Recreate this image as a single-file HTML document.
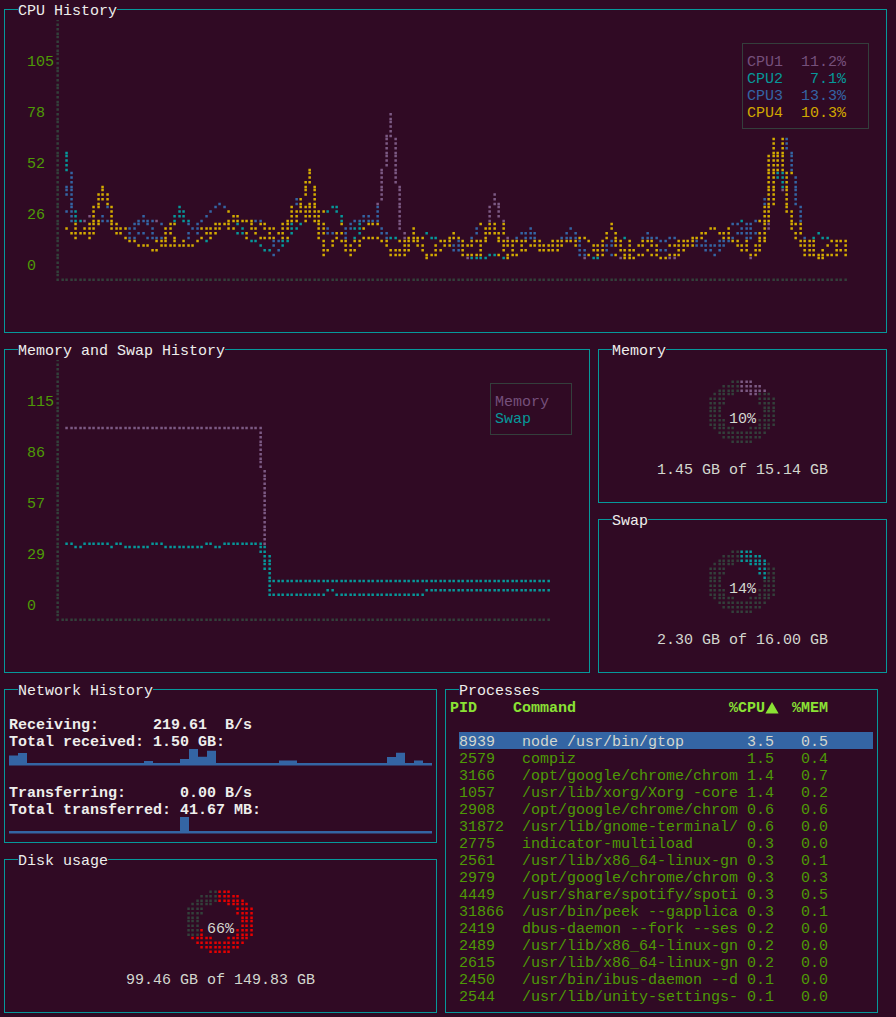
<!DOCTYPE html>
<html><head><meta charset="utf-8"><style>
html,body{margin:0;padding:0;background:#300a24;}
body{width:896px;height:1017px;overflow:hidden;position:relative;
font-family:"Liberation Mono",monospace;font-size:15px;}
.b{position:absolute;box-sizing:border-box;border:1px solid;}
.t{position:absolute;white-space:pre;line-height:17px;height:17px;margin-top:3px;}
.sel{position:absolute;}
svg{position:absolute;left:0;top:0;}
</style></head>
<body>
<svg width="896" height="1017" viewBox="0 0 896 1017"><path fill="#33403b" d="M56.4 18.8h2.5v2.5h-2.5zM56.4 23.4h2.5v2.5h-2.5zM56.4 27.9h2.5v2.5h-2.5zM56.4 32.6h2.5v2.5h-2.5zM56.4 45.0h2.5v2.5h-2.5zM56.4 49.6h2.5v2.5h-2.5zM56.4 35.8h2.5v2.5h-2.5zM56.4 40.4h2.5v2.5h-2.5zM56.4 52.8h2.5v2.5h-2.5zM56.4 57.4h2.5v2.5h-2.5zM56.4 62.0h2.5v2.5h-2.5zM56.4 66.7h2.5v2.5h-2.5zM56.4 69.8h2.5v2.5h-2.5zM56.4 74.3h2.5v2.5h-2.5zM56.4 79.0h2.5v2.5h-2.5zM56.4 83.7h2.5v2.5h-2.5zM56.4 91.3h2.5v2.5h-2.5zM56.4 96.0h2.5v2.5h-2.5zM56.4 100.7h2.5v2.5h-2.5zM56.4 86.8h2.5v2.5h-2.5zM56.4 117.7h2.5v2.5h-2.5zM56.4 103.8h2.5v2.5h-2.5zM56.4 108.3h2.5v2.5h-2.5zM56.4 113.0h2.5v2.5h-2.5zM56.4 120.8h2.5v2.5h-2.5zM56.4 125.3h2.5v2.5h-2.5zM56.4 129.9h2.5v2.5h-2.5zM56.4 134.7h2.5v2.5h-2.5zM56.4 142.3h2.5v2.5h-2.5zM56.4 146.9h2.5v2.5h-2.5zM56.4 151.7h2.5v2.5h-2.5zM56.4 137.8h2.5v2.5h-2.5zM56.4 163.9h2.5v2.5h-2.5zM56.4 168.7h2.5v2.5h-2.5zM56.4 154.8h2.5v2.5h-2.5zM56.4 159.3h2.5v2.5h-2.5zM56.4 171.8h2.5v2.5h-2.5zM56.4 176.3h2.5v2.5h-2.5zM56.4 180.9h2.5v2.5h-2.5zM56.4 185.7h2.5v2.5h-2.5zM56.4 188.8h2.5v2.5h-2.5zM56.4 193.3h2.5v2.5h-2.5zM56.4 197.9h2.5v2.5h-2.5zM56.4 202.7h2.5v2.5h-2.5zM56.4 210.3h2.5v2.5h-2.5zM56.4 214.9h2.5v2.5h-2.5zM56.4 219.7h2.5v2.5h-2.5zM56.4 205.8h2.5v2.5h-2.5zM56.4 236.7h2.5v2.5h-2.5zM56.4 222.8h2.5v2.5h-2.5zM56.4 227.3h2.5v2.5h-2.5zM56.4 231.9h2.5v2.5h-2.5zM56.4 239.8h2.5v2.5h-2.5zM56.4 244.3h2.5v2.5h-2.5zM56.4 248.9h2.5v2.5h-2.5zM56.4 253.7h2.5v2.5h-2.5zM56.4 261.4h2.5v2.5h-2.5zM56.4 265.9h2.5v2.5h-2.5zM56.4 270.6h2.5v2.5h-2.5zM56.4 256.8h2.5v2.5h-2.5zM61.4 278.4h2.5v2.5h-2.5zM56.4 273.8h2.5v2.5h-2.5zM56.4 278.4h2.5v2.5h-2.5zM65.3 278.4h2.5v2.5h-2.5zM70.3 278.4h2.5v2.5h-2.5zM74.3 278.4h2.5v2.5h-2.5zM79.3 278.4h2.5v2.5h-2.5zM88.3 278.4h2.5v2.5h-2.5zM83.3 278.4h2.5v2.5h-2.5zM97.3 278.4h2.5v2.5h-2.5zM92.3 278.4h2.5v2.5h-2.5zM101.3 278.4h2.5v2.5h-2.5zM106.3 278.4h2.5v2.5h-2.5zM110.3 278.4h2.5v2.5h-2.5zM115.3 278.4h2.5v2.5h-2.5zM124.3 278.4h2.5v2.5h-2.5zM119.3 278.4h2.5v2.5h-2.5zM133.3 278.4h2.5v2.5h-2.5zM128.3 278.4h2.5v2.5h-2.5zM137.3 278.4h2.5v2.5h-2.5zM142.3 278.4h2.5v2.5h-2.5zM146.3 278.4h2.5v2.5h-2.5zM151.3 278.4h2.5v2.5h-2.5zM160.3 278.4h2.5v2.5h-2.5zM155.3 278.4h2.5v2.5h-2.5zM169.3 278.4h2.5v2.5h-2.5zM164.3 278.4h2.5v2.5h-2.5zM173.3 278.4h2.5v2.5h-2.5zM178.3 278.4h2.5v2.5h-2.5zM182.3 278.4h2.5v2.5h-2.5zM187.3 278.4h2.5v2.5h-2.5zM196.3 278.4h2.5v2.5h-2.5zM191.3 278.4h2.5v2.5h-2.5zM200.3 278.4h2.5v2.5h-2.5zM205.3 278.4h2.5v2.5h-2.5zM209.3 278.4h2.5v2.5h-2.5zM214.3 278.4h2.5v2.5h-2.5zM218.3 278.4h2.5v2.5h-2.5zM223.3 278.4h2.5v2.5h-2.5zM232.3 278.4h2.5v2.5h-2.5zM227.3 278.4h2.5v2.5h-2.5zM236.3 278.4h2.5v2.5h-2.5zM241.3 278.4h2.5v2.5h-2.5zM245.3 278.4h2.5v2.5h-2.5zM250.3 278.4h2.5v2.5h-2.5zM254.3 278.4h2.5v2.5h-2.5zM259.4 278.4h2.5v2.5h-2.5zM268.4 278.4h2.5v2.5h-2.5zM263.4 278.4h2.5v2.5h-2.5zM272.4 278.4h2.5v2.5h-2.5zM277.4 278.4h2.5v2.5h-2.5zM281.4 278.4h2.5v2.5h-2.5zM286.4 278.4h2.5v2.5h-2.5zM295.4 278.4h2.5v2.5h-2.5zM290.4 278.4h2.5v2.5h-2.5zM304.4 278.4h2.5v2.5h-2.5zM299.4 278.4h2.5v2.5h-2.5zM308.4 278.4h2.5v2.5h-2.5zM313.4 278.4h2.5v2.5h-2.5zM317.4 278.4h2.5v2.5h-2.5zM322.4 278.4h2.5v2.5h-2.5zM331.4 278.4h2.5v2.5h-2.5zM326.4 278.4h2.5v2.5h-2.5zM340.4 278.4h2.5v2.5h-2.5zM335.4 278.4h2.5v2.5h-2.5zM344.4 278.4h2.5v2.5h-2.5zM349.4 278.4h2.5v2.5h-2.5zM353.4 278.4h2.5v2.5h-2.5zM358.4 278.4h2.5v2.5h-2.5zM367.4 278.4h2.5v2.5h-2.5zM362.4 278.4h2.5v2.5h-2.5zM376.4 278.4h2.5v2.5h-2.5zM371.4 278.4h2.5v2.5h-2.5zM380.4 278.4h2.5v2.5h-2.5zM385.4 278.4h2.5v2.5h-2.5zM389.4 278.4h2.5v2.5h-2.5zM394.4 278.4h2.5v2.5h-2.5zM403.4 278.4h2.5v2.5h-2.5zM398.4 278.4h2.5v2.5h-2.5zM407.4 278.4h2.5v2.5h-2.5zM412.4 278.4h2.5v2.5h-2.5zM416.4 278.4h2.5v2.5h-2.5zM421.4 278.4h2.5v2.5h-2.5zM425.4 278.4h2.5v2.5h-2.5zM430.4 278.4h2.5v2.5h-2.5zM439.4 278.4h2.5v2.5h-2.5zM434.4 278.4h2.5v2.5h-2.5zM443.4 278.4h2.5v2.5h-2.5zM448.4 278.4h2.5v2.5h-2.5zM452.4 278.4h2.5v2.5h-2.5zM457.4 278.4h2.5v2.5h-2.5zM466.4 278.4h2.5v2.5h-2.5zM461.4 278.4h2.5v2.5h-2.5zM475.4 278.4h2.5v2.5h-2.5zM470.4 278.4h2.5v2.5h-2.5zM479.4 278.4h2.5v2.5h-2.5zM484.4 278.4h2.5v2.5h-2.5zM488.4 278.4h2.5v2.5h-2.5zM493.4 278.4h2.5v2.5h-2.5zM502.4 278.4h2.5v2.5h-2.5zM497.4 278.4h2.5v2.5h-2.5zM511.4 278.4h2.5v2.5h-2.5zM506.4 278.4h2.5v2.5h-2.5zM515.4 278.4h2.5v2.5h-2.5zM520.4 278.4h2.5v2.5h-2.5zM524.4 278.4h2.5v2.5h-2.5zM529.4 278.4h2.5v2.5h-2.5zM538.4 278.4h2.5v2.5h-2.5zM533.4 278.4h2.5v2.5h-2.5zM547.4 278.4h2.5v2.5h-2.5zM542.4 278.4h2.5v2.5h-2.5zM551.4 278.4h2.5v2.5h-2.5zM556.4 278.4h2.5v2.5h-2.5zM560.4 278.4h2.5v2.5h-2.5zM565.4 278.4h2.5v2.5h-2.5zM574.4 278.4h2.5v2.5h-2.5zM569.4 278.4h2.5v2.5h-2.5zM578.4 278.4h2.5v2.5h-2.5zM583.4 278.4h2.5v2.5h-2.5zM587.4 278.4h2.5v2.5h-2.5zM592.4 278.4h2.5v2.5h-2.5zM596.4 278.4h2.5v2.5h-2.5zM601.4 278.4h2.5v2.5h-2.5zM610.4 278.4h2.5v2.5h-2.5zM605.4 278.4h2.5v2.5h-2.5zM614.4 278.4h2.5v2.5h-2.5zM619.4 278.4h2.5v2.5h-2.5zM623.4 278.4h2.5v2.5h-2.5zM628.4 278.4h2.5v2.5h-2.5zM637.4 278.4h2.5v2.5h-2.5zM632.4 278.4h2.5v2.5h-2.5zM641.4 278.4h2.5v2.5h-2.5zM646.4 278.4h2.5v2.5h-2.5zM650.4 278.4h2.5v2.5h-2.5zM655.4 278.4h2.5v2.5h-2.5zM659.4 278.4h2.5v2.5h-2.5zM664.4 278.4h2.5v2.5h-2.5zM673.4 278.4h2.5v2.5h-2.5zM668.4 278.4h2.5v2.5h-2.5zM677.4 278.4h2.5v2.5h-2.5zM682.4 278.4h2.5v2.5h-2.5zM686.4 278.4h2.5v2.5h-2.5zM691.4 278.4h2.5v2.5h-2.5zM695.4 278.4h2.5v2.5h-2.5zM700.4 278.4h2.5v2.5h-2.5zM709.4 278.4h2.5v2.5h-2.5zM704.4 278.4h2.5v2.5h-2.5zM718.4 278.4h2.5v2.5h-2.5zM713.4 278.4h2.5v2.5h-2.5zM722.4 278.4h2.5v2.5h-2.5zM727.4 278.4h2.5v2.5h-2.5zM731.4 278.4h2.5v2.5h-2.5zM736.4 278.4h2.5v2.5h-2.5zM745.4 278.4h2.5v2.5h-2.5zM740.4 278.4h2.5v2.5h-2.5zM749.4 278.4h2.5v2.5h-2.5zM754.4 278.4h2.5v2.5h-2.5zM758.4 278.4h2.5v2.5h-2.5zM763.4 278.4h2.5v2.5h-2.5zM767.4 278.4h2.5v2.5h-2.5zM772.4 278.4h2.5v2.5h-2.5zM781.4 278.4h2.5v2.5h-2.5zM776.4 278.4h2.5v2.5h-2.5zM785.4 278.4h2.5v2.5h-2.5zM790.4 278.4h2.5v2.5h-2.5zM794.4 278.4h2.5v2.5h-2.5zM799.4 278.4h2.5v2.5h-2.5zM808.4 278.4h2.5v2.5h-2.5zM803.4 278.4h2.5v2.5h-2.5zM812.4 278.4h2.5v2.5h-2.5zM817.4 278.4h2.5v2.5h-2.5zM821.4 278.4h2.5v2.5h-2.5zM826.4 278.4h2.5v2.5h-2.5zM830.4 278.4h2.5v2.5h-2.5zM835.4 278.4h2.5v2.5h-2.5zM844.4 278.4h2.5v2.5h-2.5zM839.4 278.4h2.5v2.5h-2.5zM56.4 358.8h2.5v2.5h-2.5zM56.4 363.4h2.5v2.5h-2.5zM56.4 367.9h2.5v2.5h-2.5zM56.4 372.6h2.5v2.5h-2.5zM56.4 380.4h2.5v2.5h-2.5zM56.4 384.9h2.5v2.5h-2.5zM56.4 389.6h2.5v2.5h-2.5zM56.4 375.8h2.5v2.5h-2.5zM56.4 401.9h2.5v2.5h-2.5zM56.4 406.6h2.5v2.5h-2.5zM56.4 392.8h2.5v2.5h-2.5zM56.4 397.4h2.5v2.5h-2.5zM56.4 409.8h2.5v2.5h-2.5zM56.4 414.4h2.5v2.5h-2.5zM56.4 418.9h2.5v2.5h-2.5zM56.4 423.6h2.5v2.5h-2.5zM56.4 426.8h2.5v2.5h-2.5zM56.4 431.4h2.5v2.5h-2.5zM56.4 435.9h2.5v2.5h-2.5zM56.4 440.6h2.5v2.5h-2.5zM56.4 452.9h2.5v2.5h-2.5zM56.4 457.6h2.5v2.5h-2.5zM56.4 443.8h2.5v2.5h-2.5zM56.4 448.4h2.5v2.5h-2.5zM56.4 474.6h2.5v2.5h-2.5zM56.4 460.8h2.5v2.5h-2.5zM56.4 465.4h2.5v2.5h-2.5zM56.4 469.9h2.5v2.5h-2.5zM56.4 477.8h2.5v2.5h-2.5zM56.4 482.4h2.5v2.5h-2.5zM56.4 486.9h2.5v2.5h-2.5zM56.4 491.6h2.5v2.5h-2.5zM56.4 499.4h2.5v2.5h-2.5zM56.4 503.9h2.5v2.5h-2.5zM56.4 508.6h2.5v2.5h-2.5zM56.4 494.8h2.5v2.5h-2.5zM56.4 525.6h2.5v2.5h-2.5zM56.4 511.8h2.5v2.5h-2.5zM56.4 516.4h2.5v2.5h-2.5zM56.4 521.0h2.5v2.5h-2.5zM56.4 528.8h2.5v2.5h-2.5zM56.4 533.4h2.5v2.5h-2.5zM56.4 538.0h2.5v2.5h-2.5zM56.4 542.6h2.5v2.5h-2.5zM56.4 545.8h2.5v2.5h-2.5zM56.4 550.4h2.5v2.5h-2.5zM56.4 555.0h2.5v2.5h-2.5zM56.4 559.6h2.5v2.5h-2.5zM56.4 572.0h2.5v2.5h-2.5zM56.4 576.6h2.5v2.5h-2.5zM56.4 562.8h2.5v2.5h-2.5zM56.4 567.4h2.5v2.5h-2.5zM56.4 593.6h2.5v2.5h-2.5zM56.4 579.8h2.5v2.5h-2.5zM56.4 584.4h2.5v2.5h-2.5zM56.4 589.0h2.5v2.5h-2.5zM56.4 596.8h2.5v2.5h-2.5zM56.4 601.4h2.5v2.5h-2.5zM56.4 606.0h2.5v2.5h-2.5zM56.4 610.6h2.5v2.5h-2.5zM56.4 618.4h2.5v2.5h-2.5zM61.4 618.4h2.5v2.5h-2.5zM56.4 613.8h2.5v2.5h-2.5zM70.3 618.4h2.5v2.5h-2.5zM65.3 618.4h2.5v2.5h-2.5zM74.3 618.4h2.5v2.5h-2.5zM79.3 618.4h2.5v2.5h-2.5zM83.3 618.4h2.5v2.5h-2.5zM88.3 618.4h2.5v2.5h-2.5zM97.3 618.4h2.5v2.5h-2.5zM92.3 618.4h2.5v2.5h-2.5zM106.3 618.4h2.5v2.5h-2.5zM101.3 618.4h2.5v2.5h-2.5zM110.3 618.4h2.5v2.5h-2.5zM115.3 618.4h2.5v2.5h-2.5zM119.3 618.4h2.5v2.5h-2.5zM124.3 618.4h2.5v2.5h-2.5zM133.3 618.4h2.5v2.5h-2.5zM128.3 618.4h2.5v2.5h-2.5zM137.3 618.4h2.5v2.5h-2.5zM142.3 618.4h2.5v2.5h-2.5zM146.3 618.4h2.5v2.5h-2.5zM151.3 618.4h2.5v2.5h-2.5zM155.3 618.4h2.5v2.5h-2.5zM160.3 618.4h2.5v2.5h-2.5zM169.3 618.4h2.5v2.5h-2.5zM164.3 618.4h2.5v2.5h-2.5zM173.3 618.4h2.5v2.5h-2.5zM178.3 618.4h2.5v2.5h-2.5zM182.3 618.4h2.5v2.5h-2.5zM187.3 618.4h2.5v2.5h-2.5zM191.3 618.4h2.5v2.5h-2.5zM196.3 618.4h2.5v2.5h-2.5zM205.3 618.4h2.5v2.5h-2.5zM200.3 618.4h2.5v2.5h-2.5zM209.3 618.4h2.5v2.5h-2.5zM214.3 618.4h2.5v2.5h-2.5zM218.3 618.4h2.5v2.5h-2.5zM223.3 618.4h2.5v2.5h-2.5zM227.3 618.4h2.5v2.5h-2.5zM232.3 618.4h2.5v2.5h-2.5zM241.3 618.4h2.5v2.5h-2.5zM236.3 618.4h2.5v2.5h-2.5zM245.3 618.4h2.5v2.5h-2.5zM250.3 618.4h2.5v2.5h-2.5zM254.3 618.4h2.5v2.5h-2.5zM259.4 618.4h2.5v2.5h-2.5zM268.4 618.4h2.5v2.5h-2.5zM263.4 618.4h2.5v2.5h-2.5zM277.4 618.4h2.5v2.5h-2.5zM272.4 618.4h2.5v2.5h-2.5zM281.4 618.4h2.5v2.5h-2.5zM286.4 618.4h2.5v2.5h-2.5zM290.4 618.4h2.5v2.5h-2.5zM295.4 618.4h2.5v2.5h-2.5zM304.4 618.4h2.5v2.5h-2.5zM299.4 618.4h2.5v2.5h-2.5zM308.4 618.4h2.5v2.5h-2.5zM313.4 618.4h2.5v2.5h-2.5zM317.4 618.4h2.5v2.5h-2.5zM322.4 618.4h2.5v2.5h-2.5zM326.4 618.4h2.5v2.5h-2.5zM331.4 618.4h2.5v2.5h-2.5zM340.4 618.4h2.5v2.5h-2.5zM335.4 618.4h2.5v2.5h-2.5zM344.4 618.4h2.5v2.5h-2.5zM349.4 618.4h2.5v2.5h-2.5zM353.4 618.4h2.5v2.5h-2.5zM358.4 618.4h2.5v2.5h-2.5zM367.4 618.4h2.5v2.5h-2.5zM362.4 618.4h2.5v2.5h-2.5zM376.4 618.4h2.5v2.5h-2.5zM371.4 618.4h2.5v2.5h-2.5zM380.4 618.4h2.5v2.5h-2.5zM385.4 618.4h2.5v2.5h-2.5zM389.4 618.4h2.5v2.5h-2.5zM394.4 618.4h2.5v2.5h-2.5zM398.4 618.4h2.5v2.5h-2.5zM403.4 618.4h2.5v2.5h-2.5zM412.4 618.4h2.5v2.5h-2.5zM407.4 618.4h2.5v2.5h-2.5zM416.4 618.4h2.5v2.5h-2.5zM421.4 618.4h2.5v2.5h-2.5zM425.4 618.4h2.5v2.5h-2.5zM430.4 618.4h2.5v2.5h-2.5zM439.4 618.4h2.5v2.5h-2.5zM434.4 618.4h2.5v2.5h-2.5zM448.4 618.4h2.5v2.5h-2.5zM443.4 618.4h2.5v2.5h-2.5zM452.4 618.4h2.5v2.5h-2.5zM457.4 618.4h2.5v2.5h-2.5zM461.4 618.4h2.5v2.5h-2.5zM466.4 618.4h2.5v2.5h-2.5zM475.4 618.4h2.5v2.5h-2.5zM470.4 618.4h2.5v2.5h-2.5zM484.4 618.4h2.5v2.5h-2.5zM479.4 618.4h2.5v2.5h-2.5zM488.4 618.4h2.5v2.5h-2.5zM493.4 618.4h2.5v2.5h-2.5zM497.4 618.4h2.5v2.5h-2.5zM502.4 618.4h2.5v2.5h-2.5zM511.4 618.4h2.5v2.5h-2.5zM506.4 618.4h2.5v2.5h-2.5zM515.4 618.4h2.5v2.5h-2.5zM520.4 618.4h2.5v2.5h-2.5zM524.4 618.4h2.5v2.5h-2.5zM529.4 618.4h2.5v2.5h-2.5zM533.4 618.4h2.5v2.5h-2.5zM538.4 618.4h2.5v2.5h-2.5zM547.4 618.4h2.5v2.5h-2.5zM542.4 618.4h2.5v2.5h-2.5zM731.4 389.6h2.5v2.5h-2.5zM736.4 384.9h2.5v2.5h-2.5zM731.4 384.9h2.5v2.5h-2.5zM736.4 380.4h2.5v2.5h-2.5zM736.4 389.6h2.5v2.5h-2.5zM731.4 380.4h2.5v2.5h-2.5zM727.4 384.9h2.5v2.5h-2.5zM727.4 389.6h2.5v2.5h-2.5zM722.4 384.9h2.5v2.5h-2.5zM722.4 389.6h2.5v2.5h-2.5zM718.4 389.6h2.5v2.5h-2.5zM718.4 401.9h2.5v2.5h-2.5zM713.4 397.4h2.5v2.5h-2.5zM718.4 397.4h2.5v2.5h-2.5zM713.4 392.8h2.5v2.5h-2.5zM718.4 392.8h2.5v2.5h-2.5zM713.4 406.6h2.5v2.5h-2.5zM718.4 406.6h2.5v2.5h-2.5zM713.4 401.9h2.5v2.5h-2.5zM722.4 392.8h2.5v2.5h-2.5zM722.4 401.9h2.5v2.5h-2.5zM722.4 397.4h2.5v2.5h-2.5zM727.4 392.8h2.5v2.5h-2.5zM731.4 392.8h2.5v2.5h-2.5zM763.4 392.8h2.5v2.5h-2.5zM758.4 401.9h2.5v2.5h-2.5zM763.4 401.9h2.5v2.5h-2.5zM758.4 397.4h2.5v2.5h-2.5zM763.4 397.4h2.5v2.5h-2.5zM763.4 406.6h2.5v2.5h-2.5zM758.4 392.8h2.5v2.5h-2.5zM767.4 401.9h2.5v2.5h-2.5zM772.4 401.9h2.5v2.5h-2.5zM767.4 397.4h2.5v2.5h-2.5zM772.4 397.4h2.5v2.5h-2.5zM767.4 406.6h2.5v2.5h-2.5zM767.4 392.8h2.5v2.5h-2.5zM772.4 406.6h2.5v2.5h-2.5zM709.4 397.4h2.5v2.5h-2.5zM709.4 401.9h2.5v2.5h-2.5zM709.4 406.6h2.5v2.5h-2.5zM709.4 418.9h2.5v2.5h-2.5zM709.4 423.6h2.5v2.5h-2.5zM709.4 409.8h2.5v2.5h-2.5zM709.4 414.4h2.5v2.5h-2.5zM713.4 414.4h2.5v2.5h-2.5zM718.4 414.4h2.5v2.5h-2.5zM713.4 409.8h2.5v2.5h-2.5zM718.4 409.8h2.5v2.5h-2.5zM713.4 423.6h2.5v2.5h-2.5zM718.4 423.6h2.5v2.5h-2.5zM713.4 418.9h2.5v2.5h-2.5zM718.4 418.9h2.5v2.5h-2.5zM758.4 418.9h2.5v2.5h-2.5zM763.4 418.9h2.5v2.5h-2.5zM763.4 414.4h2.5v2.5h-2.5zM763.4 409.8h2.5v2.5h-2.5zM758.4 423.6h2.5v2.5h-2.5zM763.4 423.6h2.5v2.5h-2.5zM767.4 414.4h2.5v2.5h-2.5zM772.4 414.4h2.5v2.5h-2.5zM767.4 409.8h2.5v2.5h-2.5zM772.4 409.8h2.5v2.5h-2.5zM767.4 423.6h2.5v2.5h-2.5zM772.4 423.6h2.5v2.5h-2.5zM767.4 418.9h2.5v2.5h-2.5zM772.4 418.9h2.5v2.5h-2.5zM722.4 418.9h2.5v2.5h-2.5zM722.4 423.6h2.5v2.5h-2.5zM718.4 426.8h2.5v2.5h-2.5zM718.4 431.4h2.5v2.5h-2.5zM713.4 426.8h2.5v2.5h-2.5zM727.4 431.4h2.5v2.5h-2.5zM722.4 426.8h2.5v2.5h-2.5zM727.4 426.8h2.5v2.5h-2.5zM727.4 435.9h2.5v2.5h-2.5zM722.4 435.9h2.5v2.5h-2.5zM722.4 431.4h2.5v2.5h-2.5zM736.4 440.6h2.5v2.5h-2.5zM731.4 431.4h2.5v2.5h-2.5zM731.4 426.8h2.5v2.5h-2.5zM731.4 440.6h2.5v2.5h-2.5zM736.4 435.9h2.5v2.5h-2.5zM731.4 435.9h2.5v2.5h-2.5zM736.4 431.4h2.5v2.5h-2.5zM754.4 431.4h2.5v2.5h-2.5zM749.4 426.8h2.5v2.5h-2.5zM754.4 426.8h2.5v2.5h-2.5zM749.4 440.6h2.5v2.5h-2.5zM749.4 435.9h2.5v2.5h-2.5zM754.4 435.9h2.5v2.5h-2.5zM749.4 431.4h2.5v2.5h-2.5zM758.4 431.4h2.5v2.5h-2.5zM763.4 431.4h2.5v2.5h-2.5zM758.4 426.8h2.5v2.5h-2.5zM763.4 426.8h2.5v2.5h-2.5zM758.4 435.9h2.5v2.5h-2.5zM767.4 426.8h2.5v2.5h-2.5zM745.4 440.6h2.5v2.5h-2.5zM740.4 431.4h2.5v2.5h-2.5zM740.4 440.6h2.5v2.5h-2.5zM745.4 435.9h2.5v2.5h-2.5zM740.4 435.9h2.5v2.5h-2.5zM745.4 431.4h2.5v2.5h-2.5zM731.4 555.0h2.5v2.5h-2.5zM736.4 559.6h2.5v2.5h-2.5zM731.4 550.4h2.5v2.5h-2.5zM731.4 559.6h2.5v2.5h-2.5zM736.4 555.0h2.5v2.5h-2.5zM736.4 550.4h2.5v2.5h-2.5zM722.4 559.6h2.5v2.5h-2.5zM727.4 555.0h2.5v2.5h-2.5zM727.4 559.6h2.5v2.5h-2.5zM722.4 555.0h2.5v2.5h-2.5zM718.4 559.6h2.5v2.5h-2.5zM713.4 562.8h2.5v2.5h-2.5zM718.4 562.8h2.5v2.5h-2.5zM713.4 576.6h2.5v2.5h-2.5zM718.4 576.6h2.5v2.5h-2.5zM713.4 572.0h2.5v2.5h-2.5zM718.4 572.0h2.5v2.5h-2.5zM718.4 567.4h2.5v2.5h-2.5zM713.4 567.4h2.5v2.5h-2.5zM722.4 562.8h2.5v2.5h-2.5zM722.4 567.4h2.5v2.5h-2.5zM727.4 562.8h2.5v2.5h-2.5zM722.4 572.0h2.5v2.5h-2.5zM731.4 562.8h2.5v2.5h-2.5zM767.4 562.8h2.5v2.5h-2.5zM767.4 576.6h2.5v2.5h-2.5zM772.4 576.6h2.5v2.5h-2.5zM767.4 572.0h2.5v2.5h-2.5zM772.4 572.0h2.5v2.5h-2.5zM767.4 567.4h2.5v2.5h-2.5zM772.4 567.4h2.5v2.5h-2.5zM709.4 567.4h2.5v2.5h-2.5zM709.4 572.0h2.5v2.5h-2.5zM709.4 576.6h2.5v2.5h-2.5zM709.4 589.0h2.5v2.5h-2.5zM709.4 593.6h2.5v2.5h-2.5zM709.4 579.8h2.5v2.5h-2.5zM709.4 584.4h2.5v2.5h-2.5zM718.4 593.6h2.5v2.5h-2.5zM713.4 589.0h2.5v2.5h-2.5zM718.4 589.0h2.5v2.5h-2.5zM713.4 584.4h2.5v2.5h-2.5zM718.4 584.4h2.5v2.5h-2.5zM713.4 579.8h2.5v2.5h-2.5zM718.4 579.8h2.5v2.5h-2.5zM713.4 593.6h2.5v2.5h-2.5zM763.4 584.4h2.5v2.5h-2.5zM763.4 579.8h2.5v2.5h-2.5zM758.4 593.6h2.5v2.5h-2.5zM763.4 593.6h2.5v2.5h-2.5zM758.4 589.0h2.5v2.5h-2.5zM763.4 589.0h2.5v2.5h-2.5zM772.4 579.8h2.5v2.5h-2.5zM767.4 593.6h2.5v2.5h-2.5zM772.4 593.6h2.5v2.5h-2.5zM767.4 589.0h2.5v2.5h-2.5zM772.4 589.0h2.5v2.5h-2.5zM767.4 584.4h2.5v2.5h-2.5zM772.4 584.4h2.5v2.5h-2.5zM767.4 579.8h2.5v2.5h-2.5zM722.4 589.0h2.5v2.5h-2.5zM722.4 593.6h2.5v2.5h-2.5zM718.4 596.8h2.5v2.5h-2.5zM718.4 601.4h2.5v2.5h-2.5zM713.4 596.8h2.5v2.5h-2.5zM722.4 606.0h2.5v2.5h-2.5zM727.4 606.0h2.5v2.5h-2.5zM722.4 601.4h2.5v2.5h-2.5zM727.4 601.4h2.5v2.5h-2.5zM722.4 596.8h2.5v2.5h-2.5zM727.4 596.8h2.5v2.5h-2.5zM736.4 606.0h2.5v2.5h-2.5zM736.4 601.4h2.5v2.5h-2.5zM731.4 606.0h2.5v2.5h-2.5zM736.4 610.6h2.5v2.5h-2.5zM731.4 601.4h2.5v2.5h-2.5zM731.4 596.8h2.5v2.5h-2.5zM731.4 610.6h2.5v2.5h-2.5zM749.4 606.0h2.5v2.5h-2.5zM754.4 606.0h2.5v2.5h-2.5zM749.4 601.4h2.5v2.5h-2.5zM754.4 601.4h2.5v2.5h-2.5zM749.4 596.8h2.5v2.5h-2.5zM754.4 596.8h2.5v2.5h-2.5zM749.4 610.6h2.5v2.5h-2.5zM758.4 606.0h2.5v2.5h-2.5zM758.4 601.4h2.5v2.5h-2.5zM763.4 601.4h2.5v2.5h-2.5zM758.4 596.8h2.5v2.5h-2.5zM763.4 596.8h2.5v2.5h-2.5zM767.4 596.8h2.5v2.5h-2.5zM740.4 610.6h2.5v2.5h-2.5zM745.4 606.0h2.5v2.5h-2.5zM740.4 606.0h2.5v2.5h-2.5zM745.4 601.4h2.5v2.5h-2.5zM745.4 610.6h2.5v2.5h-2.5zM740.4 601.4h2.5v2.5h-2.5zM209.3 895.0h2.5v2.5h-2.5zM214.3 895.0h2.5v2.5h-2.5zM209.3 890.4h2.5v2.5h-2.5zM214.3 890.4h2.5v2.5h-2.5zM209.3 899.6h2.5v2.5h-2.5zM214.3 899.6h2.5v2.5h-2.5zM200.3 895.0h2.5v2.5h-2.5zM200.3 899.6h2.5v2.5h-2.5zM205.3 895.0h2.5v2.5h-2.5zM205.3 899.6h2.5v2.5h-2.5zM196.3 899.6h2.5v2.5h-2.5zM191.3 916.6h2.5v2.5h-2.5zM191.3 902.8h2.5v2.5h-2.5zM196.3 907.4h2.5v2.5h-2.5zM196.3 902.8h2.5v2.5h-2.5zM191.3 912.0h2.5v2.5h-2.5zM196.3 916.6h2.5v2.5h-2.5zM191.3 907.4h2.5v2.5h-2.5zM196.3 912.0h2.5v2.5h-2.5zM200.3 912.0h2.5v2.5h-2.5zM205.3 902.8h2.5v2.5h-2.5zM200.3 902.8h2.5v2.5h-2.5zM200.3 907.4h2.5v2.5h-2.5zM209.3 902.8h2.5v2.5h-2.5zM187.3 916.6h2.5v2.5h-2.5zM187.3 907.4h2.5v2.5h-2.5zM187.3 912.0h2.5v2.5h-2.5zM187.3 919.8h2.5v2.5h-2.5zM187.3 924.4h2.5v2.5h-2.5zM187.3 929.0h2.5v2.5h-2.5zM187.3 933.6h2.5v2.5h-2.5zM196.3 924.4h2.5v2.5h-2.5zM191.3 933.6h2.5v2.5h-2.5zM191.3 929.0h2.5v2.5h-2.5zM196.3 933.6h2.5v2.5h-2.5zM196.3 919.8h2.5v2.5h-2.5zM191.3 924.4h2.5v2.5h-2.5zM196.3 929.0h2.5v2.5h-2.5zM191.3 919.8h2.5v2.5h-2.5z"/><path fill="#06989a" d="M65.3 151.7h2.5v2.5h-2.5zM65.3 154.8h2.5v2.5h-2.5zM65.3 159.3h2.5v2.5h-2.5zM65.3 163.9h2.5v2.5h-2.5zM65.3 168.7h2.5v2.5h-2.5zM79.3 219.7h2.5v2.5h-2.5zM74.3 210.3h2.5v2.5h-2.5zM74.3 214.9h2.5v2.5h-2.5zM74.3 219.7h2.5v2.5h-2.5zM178.3 214.9h2.5v2.5h-2.5zM178.3 210.3h2.5v2.5h-2.5zM173.3 219.7h2.5v2.5h-2.5zM173.3 214.9h2.5v2.5h-2.5zM178.3 205.8h2.5v2.5h-2.5zM187.3 219.7h2.5v2.5h-2.5zM182.3 210.3h2.5v2.5h-2.5zM182.3 214.9h2.5v2.5h-2.5zM182.3 219.7h2.5v2.5h-2.5zM205.3 239.8h2.5v2.5h-2.5zM236.3 222.8h2.5v2.5h-2.5zM236.3 231.9h2.5v2.5h-2.5zM241.3 227.3h2.5v2.5h-2.5zM241.3 231.9h2.5v2.5h-2.5zM250.3 239.8h2.5v2.5h-2.5zM254.3 239.8h2.5v2.5h-2.5zM259.4 244.3h2.5v2.5h-2.5zM263.4 248.9h2.5v2.5h-2.5zM268.4 248.9h2.5v2.5h-2.5zM286.4 239.8h2.5v2.5h-2.5zM281.4 239.8h2.5v2.5h-2.5zM281.4 244.3h2.5v2.5h-2.5zM295.4 227.3h2.5v2.5h-2.5zM290.4 222.8h2.5v2.5h-2.5zM290.4 227.3h2.5v2.5h-2.5zM290.4 231.9h2.5v2.5h-2.5zM299.4 222.8h2.5v2.5h-2.5zM331.4 205.8h2.5v2.5h-2.5zM326.4 210.3h2.5v2.5h-2.5zM340.4 214.9h2.5v2.5h-2.5zM335.4 205.8h2.5v2.5h-2.5zM340.4 219.7h2.5v2.5h-2.5zM335.4 210.3h2.5v2.5h-2.5zM358.4 222.8h2.5v2.5h-2.5zM353.4 236.7h2.5v2.5h-2.5zM358.4 231.9h2.5v2.5h-2.5zM353.4 227.3h2.5v2.5h-2.5zM358.4 227.3h2.5v2.5h-2.5zM389.4 236.7h2.5v2.5h-2.5zM394.4 236.7h2.5v2.5h-2.5zM425.4 231.9h2.5v2.5h-2.5zM430.4 236.7h2.5v2.5h-2.5zM434.4 236.7h2.5v2.5h-2.5zM475.4 256.8h2.5v2.5h-2.5zM470.4 256.8h2.5v2.5h-2.5zM479.4 256.8h2.5v2.5h-2.5zM484.4 256.8h2.5v2.5h-2.5zM488.4 253.7h2.5v2.5h-2.5zM493.4 253.7h2.5v2.5h-2.5zM502.4 256.8h2.5v2.5h-2.5zM592.4 256.8h2.5v2.5h-2.5zM596.4 256.8h2.5v2.5h-2.5zM623.4 236.7h2.5v2.5h-2.5zM740.4 219.7h2.5v2.5h-2.5zM776.4 171.8h2.5v2.5h-2.5zM781.4 185.7h2.5v2.5h-2.5zM781.4 171.8h2.5v2.5h-2.5zM781.4 180.9h2.5v2.5h-2.5zM776.4 176.3h2.5v2.5h-2.5zM781.4 176.3h2.5v2.5h-2.5zM812.4 236.7h2.5v2.5h-2.5zM817.4 231.9h2.5v2.5h-2.5zM826.4 236.7h2.5v2.5h-2.5zM821.4 236.7h2.5v2.5h-2.5zM263.4 555.0h2.5v2.5h-2.5zM263.4 550.4h2.5v2.5h-2.5zM268.4 559.6h2.5v2.5h-2.5zM268.4 555.0h2.5v2.5h-2.5zM263.4 545.8h2.5v2.5h-2.5zM263.4 559.6h2.5v2.5h-2.5zM268.4 562.8h2.5v2.5h-2.5zM268.4 576.6h2.5v2.5h-2.5zM263.4 567.4h2.5v2.5h-2.5zM268.4 572.0h2.5v2.5h-2.5zM263.4 562.8h2.5v2.5h-2.5zM268.4 567.4h2.5v2.5h-2.5zM268.4 584.4h2.5v2.5h-2.5zM268.4 589.0h2.5v2.5h-2.5zM268.4 593.6h2.5v2.5h-2.5zM268.4 579.8h2.5v2.5h-2.5zM277.4 593.6h2.5v2.5h-2.5zM272.4 579.8h2.5v2.5h-2.5zM277.4 579.8h2.5v2.5h-2.5zM272.4 593.6h2.5v2.5h-2.5zM286.4 579.8h2.5v2.5h-2.5zM281.4 593.6h2.5v2.5h-2.5zM281.4 579.8h2.5v2.5h-2.5zM286.4 593.6h2.5v2.5h-2.5zM290.4 593.6h2.5v2.5h-2.5zM295.4 593.6h2.5v2.5h-2.5zM290.4 579.8h2.5v2.5h-2.5zM295.4 579.8h2.5v2.5h-2.5zM299.4 579.8h2.5v2.5h-2.5zM304.4 593.6h2.5v2.5h-2.5zM304.4 579.8h2.5v2.5h-2.5zM299.4 593.6h2.5v2.5h-2.5zM308.4 579.8h2.5v2.5h-2.5zM313.4 579.8h2.5v2.5h-2.5zM308.4 593.6h2.5v2.5h-2.5zM313.4 593.6h2.5v2.5h-2.5zM317.4 579.8h2.5v2.5h-2.5zM322.4 579.8h2.5v2.5h-2.5zM317.4 593.6h2.5v2.5h-2.5zM322.4 593.6h2.5v2.5h-2.5zM331.4 589.0h2.5v2.5h-2.5zM326.4 579.8h2.5v2.5h-2.5zM326.4 589.0h2.5v2.5h-2.5zM331.4 579.8h2.5v2.5h-2.5zM335.4 579.8h2.5v2.5h-2.5zM340.4 593.6h2.5v2.5h-2.5zM340.4 579.8h2.5v2.5h-2.5zM335.4 593.6h2.5v2.5h-2.5zM349.4 579.8h2.5v2.5h-2.5zM344.4 593.6h2.5v2.5h-2.5zM349.4 593.6h2.5v2.5h-2.5zM344.4 579.8h2.5v2.5h-2.5zM358.4 579.8h2.5v2.5h-2.5zM353.4 593.6h2.5v2.5h-2.5zM358.4 593.6h2.5v2.5h-2.5zM353.4 579.8h2.5v2.5h-2.5zM367.4 593.6h2.5v2.5h-2.5zM362.4 579.8h2.5v2.5h-2.5zM367.4 579.8h2.5v2.5h-2.5zM362.4 593.6h2.5v2.5h-2.5zM376.4 593.6h2.5v2.5h-2.5zM371.4 579.8h2.5v2.5h-2.5zM376.4 579.8h2.5v2.5h-2.5zM371.4 593.6h2.5v2.5h-2.5zM380.4 579.8h2.5v2.5h-2.5zM385.4 579.8h2.5v2.5h-2.5zM380.4 593.6h2.5v2.5h-2.5zM385.4 593.6h2.5v2.5h-2.5zM389.4 593.6h2.5v2.5h-2.5zM389.4 579.8h2.5v2.5h-2.5zM394.4 579.8h2.5v2.5h-2.5zM394.4 593.6h2.5v2.5h-2.5zM398.4 593.6h2.5v2.5h-2.5zM403.4 593.6h2.5v2.5h-2.5zM398.4 579.8h2.5v2.5h-2.5zM403.4 579.8h2.5v2.5h-2.5zM412.4 593.6h2.5v2.5h-2.5zM407.4 579.8h2.5v2.5h-2.5zM412.4 579.8h2.5v2.5h-2.5zM407.4 593.6h2.5v2.5h-2.5zM421.4 579.8h2.5v2.5h-2.5zM416.4 593.6h2.5v2.5h-2.5zM421.4 593.6h2.5v2.5h-2.5zM416.4 579.8h2.5v2.5h-2.5zM430.4 579.8h2.5v2.5h-2.5zM430.4 589.0h2.5v2.5h-2.5zM425.4 579.8h2.5v2.5h-2.5zM425.4 589.0h2.5v2.5h-2.5zM439.4 589.0h2.5v2.5h-2.5zM434.4 579.8h2.5v2.5h-2.5zM439.4 579.8h2.5v2.5h-2.5zM434.4 589.0h2.5v2.5h-2.5zM443.4 579.8h2.5v2.5h-2.5zM443.4 589.0h2.5v2.5h-2.5zM448.4 579.8h2.5v2.5h-2.5zM448.4 589.0h2.5v2.5h-2.5zM452.4 589.0h2.5v2.5h-2.5zM457.4 579.8h2.5v2.5h-2.5zM457.4 589.0h2.5v2.5h-2.5zM452.4 579.8h2.5v2.5h-2.5zM466.4 589.0h2.5v2.5h-2.5zM461.4 579.8h2.5v2.5h-2.5zM466.4 579.8h2.5v2.5h-2.5zM461.4 589.0h2.5v2.5h-2.5zM475.4 589.0h2.5v2.5h-2.5zM470.4 579.8h2.5v2.5h-2.5zM470.4 589.0h2.5v2.5h-2.5zM475.4 579.8h2.5v2.5h-2.5zM479.4 579.8h2.5v2.5h-2.5zM484.4 579.8h2.5v2.5h-2.5zM479.4 589.0h2.5v2.5h-2.5zM484.4 589.0h2.5v2.5h-2.5zM488.4 589.0h2.5v2.5h-2.5zM493.4 579.8h2.5v2.5h-2.5zM493.4 589.0h2.5v2.5h-2.5zM488.4 579.8h2.5v2.5h-2.5zM502.4 589.0h2.5v2.5h-2.5zM497.4 579.8h2.5v2.5h-2.5zM497.4 589.0h2.5v2.5h-2.5zM502.4 579.8h2.5v2.5h-2.5zM511.4 589.0h2.5v2.5h-2.5zM506.4 579.8h2.5v2.5h-2.5zM506.4 589.0h2.5v2.5h-2.5zM511.4 579.8h2.5v2.5h-2.5zM515.4 589.0h2.5v2.5h-2.5zM520.4 579.8h2.5v2.5h-2.5zM520.4 589.0h2.5v2.5h-2.5zM515.4 579.8h2.5v2.5h-2.5zM524.4 589.0h2.5v2.5h-2.5zM529.4 579.8h2.5v2.5h-2.5zM529.4 589.0h2.5v2.5h-2.5zM524.4 579.8h2.5v2.5h-2.5zM538.4 589.0h2.5v2.5h-2.5zM533.4 579.8h2.5v2.5h-2.5zM533.4 589.0h2.5v2.5h-2.5zM538.4 579.8h2.5v2.5h-2.5zM547.4 589.0h2.5v2.5h-2.5zM542.4 579.8h2.5v2.5h-2.5zM542.4 589.0h2.5v2.5h-2.5zM547.4 579.8h2.5v2.5h-2.5zM65.3 542.6h2.5v2.5h-2.5zM70.3 542.6h2.5v2.5h-2.5zM74.3 545.8h2.5v2.5h-2.5zM79.3 545.8h2.5v2.5h-2.5zM83.3 542.6h2.5v2.5h-2.5zM88.3 542.6h2.5v2.5h-2.5zM97.3 542.6h2.5v2.5h-2.5zM92.3 542.6h2.5v2.5h-2.5zM101.3 542.6h2.5v2.5h-2.5zM106.3 542.6h2.5v2.5h-2.5zM110.3 545.8h2.5v2.5h-2.5zM115.3 542.6h2.5v2.5h-2.5zM119.3 542.6h2.5v2.5h-2.5zM124.3 545.8h2.5v2.5h-2.5zM133.3 545.8h2.5v2.5h-2.5zM128.3 545.8h2.5v2.5h-2.5zM137.3 545.8h2.5v2.5h-2.5zM142.3 545.8h2.5v2.5h-2.5zM146.3 545.8h2.5v2.5h-2.5zM151.3 542.6h2.5v2.5h-2.5zM155.3 542.6h2.5v2.5h-2.5zM160.3 542.6h2.5v2.5h-2.5zM169.3 545.8h2.5v2.5h-2.5zM164.3 545.8h2.5v2.5h-2.5zM173.3 545.8h2.5v2.5h-2.5zM178.3 545.8h2.5v2.5h-2.5zM182.3 545.8h2.5v2.5h-2.5zM187.3 545.8h2.5v2.5h-2.5zM191.3 545.8h2.5v2.5h-2.5zM196.3 545.8h2.5v2.5h-2.5zM200.3 545.8h2.5v2.5h-2.5zM205.3 542.6h2.5v2.5h-2.5zM209.3 542.6h2.5v2.5h-2.5zM214.3 545.8h2.5v2.5h-2.5zM218.3 545.8h2.5v2.5h-2.5zM223.3 542.6h2.5v2.5h-2.5zM232.3 542.6h2.5v2.5h-2.5zM227.3 542.6h2.5v2.5h-2.5zM236.3 542.6h2.5v2.5h-2.5zM241.3 542.6h2.5v2.5h-2.5zM245.3 542.6h2.5v2.5h-2.5zM250.3 542.6h2.5v2.5h-2.5zM254.3 542.6h2.5v2.5h-2.5zM259.4 542.6h2.5v2.5h-2.5zM259.4 545.8h2.5v2.5h-2.5zM259.4 550.4h2.5v2.5h-2.5zM740.4 555.0h2.5v2.5h-2.5zM745.4 550.4h2.5v2.5h-2.5zM745.4 559.6h2.5v2.5h-2.5zM740.4 550.4h2.5v2.5h-2.5zM740.4 559.6h2.5v2.5h-2.5zM745.4 555.0h2.5v2.5h-2.5zM749.4 555.0h2.5v2.5h-2.5zM754.4 555.0h2.5v2.5h-2.5zM749.4 550.4h2.5v2.5h-2.5zM749.4 559.6h2.5v2.5h-2.5zM754.4 559.6h2.5v2.5h-2.5zM763.4 559.6h2.5v2.5h-2.5zM758.4 555.0h2.5v2.5h-2.5zM758.4 559.6h2.5v2.5h-2.5zM749.4 562.8h2.5v2.5h-2.5zM754.4 562.8h2.5v2.5h-2.5zM758.4 567.4h2.5v2.5h-2.5zM763.4 567.4h2.5v2.5h-2.5zM758.4 562.8h2.5v2.5h-2.5zM763.4 576.6h2.5v2.5h-2.5zM763.4 562.8h2.5v2.5h-2.5zM758.4 572.0h2.5v2.5h-2.5zM763.4 572.0h2.5v2.5h-2.5z"/><path fill="#3465a4" d="M70.3 171.8h2.5v2.5h-2.5zM65.3 185.7h2.5v2.5h-2.5zM70.3 185.7h2.5v2.5h-2.5zM70.3 180.9h2.5v2.5h-2.5zM70.3 176.3h2.5v2.5h-2.5zM70.3 197.9h2.5v2.5h-2.5zM65.3 193.3h2.5v2.5h-2.5zM70.3 193.3h2.5v2.5h-2.5zM65.3 188.8h2.5v2.5h-2.5zM70.3 188.8h2.5v2.5h-2.5zM70.3 202.7h2.5v2.5h-2.5zM70.3 214.9h2.5v2.5h-2.5zM65.3 210.3h2.5v2.5h-2.5zM70.3 210.3h2.5v2.5h-2.5zM70.3 219.7h2.5v2.5h-2.5zM70.3 205.8h2.5v2.5h-2.5zM106.3 219.7h2.5v2.5h-2.5zM101.3 214.9h2.5v2.5h-2.5zM106.3 205.8h2.5v2.5h-2.5zM101.3 219.7h2.5v2.5h-2.5zM133.3 222.8h2.5v2.5h-2.5zM128.3 236.7h2.5v2.5h-2.5zM133.3 236.7h2.5v2.5h-2.5zM128.3 231.9h2.5v2.5h-2.5zM128.3 227.3h2.5v2.5h-2.5zM133.3 227.3h2.5v2.5h-2.5zM142.3 214.9h2.5v2.5h-2.5zM142.3 219.7h2.5v2.5h-2.5zM137.3 219.7h2.5v2.5h-2.5zM137.3 222.8h2.5v2.5h-2.5zM137.3 231.9h2.5v2.5h-2.5zM142.3 231.9h2.5v2.5h-2.5zM151.3 219.7h2.5v2.5h-2.5zM146.3 219.7h2.5v2.5h-2.5zM151.3 236.7h2.5v2.5h-2.5zM151.3 231.9h2.5v2.5h-2.5zM146.3 222.8h2.5v2.5h-2.5zM146.3 236.7h2.5v2.5h-2.5zM151.3 227.3h2.5v2.5h-2.5zM155.3 236.7h2.5v2.5h-2.5zM160.3 236.7h2.5v2.5h-2.5zM160.3 222.8h2.5v2.5h-2.5zM187.3 222.8h2.5v2.5h-2.5zM187.3 231.9h2.5v2.5h-2.5zM187.3 236.7h2.5v2.5h-2.5zM196.3 227.3h2.5v2.5h-2.5zM196.3 231.9h2.5v2.5h-2.5zM191.3 227.3h2.5v2.5h-2.5zM196.3 222.8h2.5v2.5h-2.5zM200.3 219.7h2.5v2.5h-2.5zM205.3 214.9h2.5v2.5h-2.5zM209.3 210.3h2.5v2.5h-2.5zM214.3 205.8h2.5v2.5h-2.5zM218.3 202.7h2.5v2.5h-2.5zM223.3 205.8h2.5v2.5h-2.5zM254.3 219.7h2.5v2.5h-2.5zM259.4 219.7h2.5v2.5h-2.5zM277.4 248.9h2.5v2.5h-2.5zM272.4 239.8h2.5v2.5h-2.5zM272.4 253.7h2.5v2.5h-2.5zM277.4 239.8h2.5v2.5h-2.5zM272.4 244.3h2.5v2.5h-2.5zM295.4 202.7h2.5v2.5h-2.5zM295.4 197.9h2.5v2.5h-2.5zM331.4 231.9h2.5v2.5h-2.5zM326.4 227.3h2.5v2.5h-2.5zM326.4 231.9h2.5v2.5h-2.5zM344.4 227.3h2.5v2.5h-2.5zM349.4 227.3h2.5v2.5h-2.5zM344.4 236.7h2.5v2.5h-2.5zM349.4 222.8h2.5v2.5h-2.5zM344.4 231.9h2.5v2.5h-2.5zM358.4 219.7h2.5v2.5h-2.5zM353.4 219.7h2.5v2.5h-2.5zM362.4 214.9h2.5v2.5h-2.5zM362.4 219.7h2.5v2.5h-2.5zM367.4 214.9h2.5v2.5h-2.5zM367.4 219.7h2.5v2.5h-2.5zM376.4 210.3h2.5v2.5h-2.5zM371.4 219.7h2.5v2.5h-2.5zM376.4 219.7h2.5v2.5h-2.5zM376.4 205.8h2.5v2.5h-2.5zM376.4 214.9h2.5v2.5h-2.5zM380.4 227.3h2.5v2.5h-2.5zM380.4 231.9h2.5v2.5h-2.5zM385.4 231.9h2.5v2.5h-2.5zM385.4 236.7h2.5v2.5h-2.5zM452.4 248.9h2.5v2.5h-2.5zM457.4 248.9h2.5v2.5h-2.5zM452.4 244.3h2.5v2.5h-2.5zM457.4 244.3h2.5v2.5h-2.5zM457.4 239.8h2.5v2.5h-2.5zM475.4 227.3h2.5v2.5h-2.5zM475.4 231.9h2.5v2.5h-2.5zM470.4 236.7h2.5v2.5h-2.5zM515.4 236.7h2.5v2.5h-2.5zM520.4 231.9h2.5v2.5h-2.5zM529.4 236.7h2.5v2.5h-2.5zM524.4 236.7h2.5v2.5h-2.5zM524.4 231.9h2.5v2.5h-2.5zM529.4 231.9h2.5v2.5h-2.5zM529.4 227.3h2.5v2.5h-2.5zM533.4 236.7h2.5v2.5h-2.5zM533.4 231.9h2.5v2.5h-2.5zM560.4 236.7h2.5v2.5h-2.5zM565.4 231.9h2.5v2.5h-2.5zM565.4 236.7h2.5v2.5h-2.5zM574.4 231.9h2.5v2.5h-2.5zM574.4 236.7h2.5v2.5h-2.5zM569.4 227.3h2.5v2.5h-2.5zM569.4 236.7h2.5v2.5h-2.5zM578.4 253.7h2.5v2.5h-2.5zM583.4 253.7h2.5v2.5h-2.5zM578.4 248.9h2.5v2.5h-2.5zM583.4 248.9h2.5v2.5h-2.5zM578.4 244.3h2.5v2.5h-2.5zM578.4 239.8h2.5v2.5h-2.5zM610.4 239.8h2.5v2.5h-2.5zM610.4 253.7h2.5v2.5h-2.5zM605.4 244.3h2.5v2.5h-2.5zM610.4 244.3h2.5v2.5h-2.5zM605.4 248.9h2.5v2.5h-2.5zM641.4 236.7h2.5v2.5h-2.5zM646.4 236.7h2.5v2.5h-2.5zM646.4 231.9h2.5v2.5h-2.5zM655.4 236.7h2.5v2.5h-2.5zM650.4 236.7h2.5v2.5h-2.5zM659.4 248.9h2.5v2.5h-2.5zM664.4 248.9h2.5v2.5h-2.5zM659.4 239.8h2.5v2.5h-2.5zM664.4 239.8h2.5v2.5h-2.5zM668.4 236.7h2.5v2.5h-2.5zM673.4 236.7h2.5v2.5h-2.5zM700.4 244.3h2.5v2.5h-2.5zM695.4 239.8h2.5v2.5h-2.5zM695.4 244.3h2.5v2.5h-2.5zM704.4 239.8h2.5v2.5h-2.5zM704.4 248.9h2.5v2.5h-2.5zM709.4 248.9h2.5v2.5h-2.5zM704.4 244.3h2.5v2.5h-2.5zM709.4 244.3h2.5v2.5h-2.5zM718.4 248.9h2.5v2.5h-2.5zM713.4 244.3h2.5v2.5h-2.5zM718.4 244.3h2.5v2.5h-2.5zM718.4 239.8h2.5v2.5h-2.5zM713.4 253.7h2.5v2.5h-2.5zM727.4 239.8h2.5v2.5h-2.5zM722.4 239.8h2.5v2.5h-2.5zM722.4 244.3h2.5v2.5h-2.5zM736.4 222.8h2.5v2.5h-2.5zM731.4 236.7h2.5v2.5h-2.5zM736.4 231.9h2.5v2.5h-2.5zM731.4 222.8h2.5v2.5h-2.5zM745.4 236.7h2.5v2.5h-2.5zM740.4 227.3h2.5v2.5h-2.5zM745.4 222.8h2.5v2.5h-2.5zM745.4 231.9h2.5v2.5h-2.5zM745.4 227.3h2.5v2.5h-2.5zM740.4 231.9h2.5v2.5h-2.5zM749.4 236.7h2.5v2.5h-2.5zM749.4 222.8h2.5v2.5h-2.5zM749.4 231.9h2.5v2.5h-2.5zM754.4 231.9h2.5v2.5h-2.5zM749.4 227.3h2.5v2.5h-2.5zM754.4 219.7h2.5v2.5h-2.5zM763.4 197.9h2.5v2.5h-2.5zM763.4 202.7h2.5v2.5h-2.5zM790.4 151.7h2.5v2.5h-2.5zM785.4 137.8h2.5v2.5h-2.5zM785.4 142.3h2.5v2.5h-2.5zM785.4 146.9h2.5v2.5h-2.5zM790.4 163.9h2.5v2.5h-2.5zM790.4 168.7h2.5v2.5h-2.5zM790.4 154.8h2.5v2.5h-2.5zM790.4 159.3h2.5v2.5h-2.5zM794.4 176.3h2.5v2.5h-2.5zM794.4 180.9h2.5v2.5h-2.5zM794.4 185.7h2.5v2.5h-2.5zM794.4 202.7h2.5v2.5h-2.5zM794.4 188.8h2.5v2.5h-2.5zM794.4 193.3h2.5v2.5h-2.5zM794.4 197.9h2.5v2.5h-2.5zM799.4 219.7h2.5v2.5h-2.5zM799.4 205.8h2.5v2.5h-2.5zM799.4 210.3h2.5v2.5h-2.5zM799.4 214.9h2.5v2.5h-2.5zM803.4 236.7h2.5v2.5h-2.5z"/><path fill="#d4ac00" d="M65.3 227.3h2.5v2.5h-2.5zM70.3 231.9h2.5v2.5h-2.5zM74.3 222.8h2.5v2.5h-2.5zM74.3 236.7h2.5v2.5h-2.5zM74.3 231.9h2.5v2.5h-2.5zM79.3 231.9h2.5v2.5h-2.5zM74.3 227.3h2.5v2.5h-2.5zM88.3 227.3h2.5v2.5h-2.5zM88.3 222.8h2.5v2.5h-2.5zM88.3 236.7h2.5v2.5h-2.5zM83.3 231.9h2.5v2.5h-2.5zM88.3 231.9h2.5v2.5h-2.5zM83.3 227.3h2.5v2.5h-2.5zM92.3 214.9h2.5v2.5h-2.5zM92.3 210.3h2.5v2.5h-2.5zM97.3 205.8h2.5v2.5h-2.5zM97.3 219.7h2.5v2.5h-2.5zM92.3 219.7h2.5v2.5h-2.5zM92.3 205.8h2.5v2.5h-2.5zM92.3 222.8h2.5v2.5h-2.5zM92.3 227.3h2.5v2.5h-2.5zM92.3 231.9h2.5v2.5h-2.5zM97.3 222.8h2.5v2.5h-2.5zM97.3 202.7h2.5v2.5h-2.5zM97.3 193.3h2.5v2.5h-2.5zM97.3 197.9h2.5v2.5h-2.5zM101.3 185.7h2.5v2.5h-2.5zM106.3 197.9h2.5v2.5h-2.5zM101.3 197.9h2.5v2.5h-2.5zM106.3 193.3h2.5v2.5h-2.5zM106.3 202.7h2.5v2.5h-2.5zM101.3 193.3h2.5v2.5h-2.5zM101.3 188.8h2.5v2.5h-2.5zM110.3 205.8h2.5v2.5h-2.5zM110.3 210.3h2.5v2.5h-2.5zM110.3 214.9h2.5v2.5h-2.5zM110.3 219.7h2.5v2.5h-2.5zM110.3 227.3h2.5v2.5h-2.5zM115.3 231.9h2.5v2.5h-2.5zM110.3 222.8h2.5v2.5h-2.5zM115.3 227.3h2.5v2.5h-2.5zM115.3 222.8h2.5v2.5h-2.5zM124.3 227.3h2.5v2.5h-2.5zM124.3 236.7h2.5v2.5h-2.5zM119.3 227.3h2.5v2.5h-2.5zM119.3 231.9h2.5v2.5h-2.5zM128.3 239.8h2.5v2.5h-2.5zM133.3 239.8h2.5v2.5h-2.5zM142.3 244.3h2.5v2.5h-2.5zM137.3 244.3h2.5v2.5h-2.5zM151.3 248.9h2.5v2.5h-2.5zM146.3 244.3h2.5v2.5h-2.5zM155.3 239.8h2.5v2.5h-2.5zM155.3 248.9h2.5v2.5h-2.5zM160.3 244.3h2.5v2.5h-2.5zM160.3 239.8h2.5v2.5h-2.5zM164.3 227.3h2.5v2.5h-2.5zM169.3 231.9h2.5v2.5h-2.5zM164.3 236.7h2.5v2.5h-2.5zM164.3 231.9h2.5v2.5h-2.5zM169.3 227.3h2.5v2.5h-2.5zM169.3 222.8h2.5v2.5h-2.5zM164.3 239.8h2.5v2.5h-2.5zM164.3 244.3h2.5v2.5h-2.5zM169.3 244.3h2.5v2.5h-2.5zM173.3 222.8h2.5v2.5h-2.5zM173.3 236.7h2.5v2.5h-2.5zM173.3 244.3h2.5v2.5h-2.5zM178.3 244.3h2.5v2.5h-2.5zM173.3 239.8h2.5v2.5h-2.5zM187.3 244.3h2.5v2.5h-2.5zM182.3 239.8h2.5v2.5h-2.5zM182.3 244.3h2.5v2.5h-2.5zM196.3 239.8h2.5v2.5h-2.5zM191.3 244.3h2.5v2.5h-2.5zM205.3 231.9h2.5v2.5h-2.5zM205.3 227.3h2.5v2.5h-2.5zM200.3 227.3h2.5v2.5h-2.5zM200.3 236.7h2.5v2.5h-2.5zM209.3 227.3h2.5v2.5h-2.5zM214.3 227.3h2.5v2.5h-2.5zM214.3 222.8h2.5v2.5h-2.5zM209.3 236.7h2.5v2.5h-2.5zM209.3 231.9h2.5v2.5h-2.5zM214.3 231.9h2.5v2.5h-2.5zM223.3 222.8h2.5v2.5h-2.5zM218.3 222.8h2.5v2.5h-2.5zM218.3 227.3h2.5v2.5h-2.5zM227.3 210.3h2.5v2.5h-2.5zM232.3 214.9h2.5v2.5h-2.5zM227.3 219.7h2.5v2.5h-2.5zM232.3 219.7h2.5v2.5h-2.5zM227.3 222.8h2.5v2.5h-2.5zM227.3 227.3h2.5v2.5h-2.5zM232.3 227.3h2.5v2.5h-2.5zM236.3 219.7h2.5v2.5h-2.5zM241.3 219.7h2.5v2.5h-2.5zM236.3 214.9h2.5v2.5h-2.5zM250.3 219.7h2.5v2.5h-2.5zM245.3 219.7h2.5v2.5h-2.5zM250.3 222.8h2.5v2.5h-2.5zM245.3 231.9h2.5v2.5h-2.5zM245.3 236.7h2.5v2.5h-2.5zM250.3 227.3h2.5v2.5h-2.5zM254.3 231.9h2.5v2.5h-2.5zM259.4 222.8h2.5v2.5h-2.5zM254.3 227.3h2.5v2.5h-2.5zM259.4 236.7h2.5v2.5h-2.5zM268.4 236.7h2.5v2.5h-2.5zM268.4 231.9h2.5v2.5h-2.5zM263.4 222.8h2.5v2.5h-2.5zM263.4 236.7h2.5v2.5h-2.5zM268.4 227.3h2.5v2.5h-2.5zM263.4 227.3h2.5v2.5h-2.5zM272.4 227.3h2.5v2.5h-2.5zM272.4 236.7h2.5v2.5h-2.5zM277.4 231.9h2.5v2.5h-2.5zM281.4 227.3h2.5v2.5h-2.5zM281.4 222.8h2.5v2.5h-2.5zM281.4 236.7h2.5v2.5h-2.5zM281.4 231.9h2.5v2.5h-2.5zM286.4 227.3h2.5v2.5h-2.5zM286.4 222.8h2.5v2.5h-2.5zM286.4 236.7h2.5v2.5h-2.5zM286.4 219.7h2.5v2.5h-2.5zM290.4 214.9h2.5v2.5h-2.5zM295.4 214.9h2.5v2.5h-2.5zM290.4 210.3h2.5v2.5h-2.5zM295.4 210.3h2.5v2.5h-2.5zM290.4 219.7h2.5v2.5h-2.5zM290.4 205.8h2.5v2.5h-2.5zM295.4 219.7h2.5v2.5h-2.5zM299.4 197.9h2.5v2.5h-2.5zM304.4 188.8h2.5v2.5h-2.5zM299.4 202.7h2.5v2.5h-2.5zM304.4 193.3h2.5v2.5h-2.5zM304.4 210.3h2.5v2.5h-2.5zM299.4 205.8h2.5v2.5h-2.5zM304.4 219.7h2.5v2.5h-2.5zM304.4 205.8h2.5v2.5h-2.5zM304.4 214.9h2.5v2.5h-2.5zM299.4 210.3h2.5v2.5h-2.5zM304.4 180.9h2.5v2.5h-2.5zM304.4 185.7h2.5v2.5h-2.5zM308.4 168.7h2.5v2.5h-2.5zM308.4 176.3h2.5v2.5h-2.5zM308.4 180.9h2.5v2.5h-2.5zM313.4 185.7h2.5v2.5h-2.5zM308.4 171.8h2.5v2.5h-2.5zM313.4 197.9h2.5v2.5h-2.5zM313.4 193.3h2.5v2.5h-2.5zM313.4 188.8h2.5v2.5h-2.5zM308.4 202.7h2.5v2.5h-2.5zM313.4 202.7h2.5v2.5h-2.5zM313.4 214.9h2.5v2.5h-2.5zM308.4 210.3h2.5v2.5h-2.5zM313.4 210.3h2.5v2.5h-2.5zM308.4 205.8h2.5v2.5h-2.5zM313.4 219.7h2.5v2.5h-2.5zM313.4 205.8h2.5v2.5h-2.5zM308.4 214.9h2.5v2.5h-2.5zM322.4 210.3h2.5v2.5h-2.5zM317.4 210.3h2.5v2.5h-2.5zM317.4 214.9h2.5v2.5h-2.5zM317.4 219.7h2.5v2.5h-2.5zM322.4 222.8h2.5v2.5h-2.5zM317.4 236.7h2.5v2.5h-2.5zM317.4 231.9h2.5v2.5h-2.5zM322.4 231.9h2.5v2.5h-2.5zM317.4 227.3h2.5v2.5h-2.5zM322.4 227.3h2.5v2.5h-2.5zM317.4 222.8h2.5v2.5h-2.5zM322.4 239.8h2.5v2.5h-2.5zM322.4 244.3h2.5v2.5h-2.5zM322.4 248.9h2.5v2.5h-2.5zM322.4 253.7h2.5v2.5h-2.5zM326.4 248.9h2.5v2.5h-2.5zM331.4 239.8h2.5v2.5h-2.5zM331.4 244.3h2.5v2.5h-2.5zM340.4 222.8h2.5v2.5h-2.5zM340.4 231.9h2.5v2.5h-2.5zM335.4 231.9h2.5v2.5h-2.5zM335.4 236.7h2.5v2.5h-2.5zM340.4 239.8h2.5v2.5h-2.5zM349.4 244.3h2.5v2.5h-2.5zM344.4 239.8h2.5v2.5h-2.5zM349.4 253.7h2.5v2.5h-2.5zM344.4 248.9h2.5v2.5h-2.5zM349.4 248.9h2.5v2.5h-2.5zM344.4 244.3h2.5v2.5h-2.5zM358.4 244.3h2.5v2.5h-2.5zM358.4 239.8h2.5v2.5h-2.5zM353.4 239.8h2.5v2.5h-2.5zM353.4 248.9h2.5v2.5h-2.5zM367.4 236.7h2.5v2.5h-2.5zM362.4 227.3h2.5v2.5h-2.5zM367.4 222.8h2.5v2.5h-2.5zM362.4 236.7h2.5v2.5h-2.5zM376.4 236.7h2.5v2.5h-2.5zM371.4 222.8h2.5v2.5h-2.5zM376.4 222.8h2.5v2.5h-2.5zM371.4 236.7h2.5v2.5h-2.5zM385.4 239.8h2.5v2.5h-2.5zM385.4 244.3h2.5v2.5h-2.5zM380.4 239.8h2.5v2.5h-2.5zM394.4 248.9h2.5v2.5h-2.5zM394.4 253.7h2.5v2.5h-2.5zM389.4 248.9h2.5v2.5h-2.5zM389.4 253.7h2.5v2.5h-2.5zM403.4 253.7h2.5v2.5h-2.5zM398.4 248.9h2.5v2.5h-2.5zM403.4 248.9h2.5v2.5h-2.5zM403.4 244.3h2.5v2.5h-2.5zM398.4 239.8h2.5v2.5h-2.5zM403.4 239.8h2.5v2.5h-2.5zM398.4 253.7h2.5v2.5h-2.5zM412.4 236.7h2.5v2.5h-2.5zM407.4 236.7h2.5v2.5h-2.5zM412.4 227.3h2.5v2.5h-2.5zM412.4 231.9h2.5v2.5h-2.5zM407.4 244.3h2.5v2.5h-2.5zM407.4 248.9h2.5v2.5h-2.5zM412.4 239.8h2.5v2.5h-2.5zM407.4 239.8h2.5v2.5h-2.5zM416.4 236.7h2.5v2.5h-2.5zM421.4 236.7h2.5v2.5h-2.5zM421.4 244.3h2.5v2.5h-2.5zM421.4 248.9h2.5v2.5h-2.5zM416.4 239.8h2.5v2.5h-2.5zM416.4 244.3h2.5v2.5h-2.5zM430.4 253.7h2.5v2.5h-2.5zM425.4 253.7h2.5v2.5h-2.5zM425.4 256.8h2.5v2.5h-2.5zM439.4 239.8h2.5v2.5h-2.5zM434.4 253.7h2.5v2.5h-2.5zM434.4 248.9h2.5v2.5h-2.5zM439.4 248.9h2.5v2.5h-2.5zM434.4 244.3h2.5v2.5h-2.5zM448.4 239.8h2.5v2.5h-2.5zM448.4 244.3h2.5v2.5h-2.5zM443.4 239.8h2.5v2.5h-2.5zM443.4 244.3h2.5v2.5h-2.5zM448.4 236.7h2.5v2.5h-2.5zM452.4 231.9h2.5v2.5h-2.5zM452.4 236.7h2.5v2.5h-2.5zM457.4 236.7h2.5v2.5h-2.5zM461.4 239.8h2.5v2.5h-2.5zM461.4 253.7h2.5v2.5h-2.5zM466.4 253.7h2.5v2.5h-2.5zM461.4 248.9h2.5v2.5h-2.5zM461.4 244.3h2.5v2.5h-2.5zM466.4 244.3h2.5v2.5h-2.5zM475.4 253.7h2.5v2.5h-2.5zM470.4 244.3h2.5v2.5h-2.5zM470.4 239.8h2.5v2.5h-2.5zM475.4 239.8h2.5v2.5h-2.5zM470.4 253.7h2.5v2.5h-2.5zM479.4 222.8h2.5v2.5h-2.5zM484.4 236.7h2.5v2.5h-2.5zM484.4 227.3h2.5v2.5h-2.5zM484.4 231.9h2.5v2.5h-2.5zM484.4 239.8h2.5v2.5h-2.5zM479.4 253.7h2.5v2.5h-2.5zM479.4 248.9h2.5v2.5h-2.5zM479.4 244.3h2.5v2.5h-2.5zM479.4 239.8h2.5v2.5h-2.5zM493.4 222.8h2.5v2.5h-2.5zM488.4 231.9h2.5v2.5h-2.5zM493.4 231.9h2.5v2.5h-2.5zM493.4 227.3h2.5v2.5h-2.5zM488.4 227.3h2.5v2.5h-2.5zM488.4 222.8h2.5v2.5h-2.5zM502.4 222.8h2.5v2.5h-2.5zM497.4 236.7h2.5v2.5h-2.5zM502.4 231.9h2.5v2.5h-2.5zM502.4 227.3h2.5v2.5h-2.5zM497.4 231.9h2.5v2.5h-2.5zM502.4 248.9h2.5v2.5h-2.5zM497.4 239.8h2.5v2.5h-2.5zM497.4 253.7h2.5v2.5h-2.5zM502.4 244.3h2.5v2.5h-2.5zM502.4 239.8h2.5v2.5h-2.5zM506.4 239.8h2.5v2.5h-2.5zM506.4 253.7h2.5v2.5h-2.5zM511.4 244.3h2.5v2.5h-2.5zM511.4 239.8h2.5v2.5h-2.5zM511.4 253.7h2.5v2.5h-2.5zM506.4 244.3h2.5v2.5h-2.5zM511.4 248.9h2.5v2.5h-2.5zM506.4 256.8h2.5v2.5h-2.5zM520.4 248.9h2.5v2.5h-2.5zM515.4 239.8h2.5v2.5h-2.5zM515.4 253.7h2.5v2.5h-2.5zM520.4 244.3h2.5v2.5h-2.5zM520.4 239.8h2.5v2.5h-2.5zM529.4 244.3h2.5v2.5h-2.5zM524.4 239.8h2.5v2.5h-2.5zM524.4 248.9h2.5v2.5h-2.5zM533.4 239.8h2.5v2.5h-2.5zM538.4 239.8h2.5v2.5h-2.5zM538.4 248.9h2.5v2.5h-2.5zM533.4 244.3h2.5v2.5h-2.5zM538.4 244.3h2.5v2.5h-2.5zM542.4 244.3h2.5v2.5h-2.5zM542.4 248.9h2.5v2.5h-2.5zM547.4 244.3h2.5v2.5h-2.5zM547.4 248.9h2.5v2.5h-2.5zM556.4 239.8h2.5v2.5h-2.5zM556.4 248.9h2.5v2.5h-2.5zM551.4 239.8h2.5v2.5h-2.5zM551.4 248.9h2.5v2.5h-2.5zM556.4 244.3h2.5v2.5h-2.5zM551.4 244.3h2.5v2.5h-2.5zM560.4 239.8h2.5v2.5h-2.5zM560.4 244.3h2.5v2.5h-2.5zM565.4 239.8h2.5v2.5h-2.5zM569.4 239.8h2.5v2.5h-2.5zM574.4 239.8h2.5v2.5h-2.5zM574.4 244.3h2.5v2.5h-2.5zM583.4 236.7h2.5v2.5h-2.5zM578.4 236.7h2.5v2.5h-2.5zM592.4 244.3h2.5v2.5h-2.5zM587.4 253.7h2.5v2.5h-2.5zM587.4 239.8h2.5v2.5h-2.5zM592.4 248.9h2.5v2.5h-2.5zM601.4 253.7h2.5v2.5h-2.5zM596.4 248.9h2.5v2.5h-2.5zM601.4 248.9h2.5v2.5h-2.5zM596.4 244.3h2.5v2.5h-2.5zM601.4 244.3h2.5v2.5h-2.5zM601.4 239.8h2.5v2.5h-2.5zM596.4 253.7h2.5v2.5h-2.5zM605.4 236.7h2.5v2.5h-2.5zM610.4 222.8h2.5v2.5h-2.5zM610.4 227.3h2.5v2.5h-2.5zM605.4 231.9h2.5v2.5h-2.5zM614.4 231.9h2.5v2.5h-2.5zM614.4 236.7h2.5v2.5h-2.5zM619.4 248.9h2.5v2.5h-2.5zM614.4 239.8h2.5v2.5h-2.5zM614.4 253.7h2.5v2.5h-2.5zM619.4 244.3h2.5v2.5h-2.5zM614.4 244.3h2.5v2.5h-2.5zM619.4 239.8h2.5v2.5h-2.5zM623.4 253.7h2.5v2.5h-2.5zM628.4 253.7h2.5v2.5h-2.5zM623.4 248.9h2.5v2.5h-2.5zM628.4 248.9h2.5v2.5h-2.5zM628.4 244.3h2.5v2.5h-2.5zM628.4 239.8h2.5v2.5h-2.5zM623.4 256.8h2.5v2.5h-2.5zM628.4 256.8h2.5v2.5h-2.5zM637.4 253.7h2.5v2.5h-2.5zM632.4 248.9h2.5v2.5h-2.5zM637.4 244.3h2.5v2.5h-2.5zM632.4 256.8h2.5v2.5h-2.5zM646.4 239.8h2.5v2.5h-2.5zM641.4 244.3h2.5v2.5h-2.5zM646.4 248.9h2.5v2.5h-2.5zM641.4 239.8h2.5v2.5h-2.5zM641.4 253.7h2.5v2.5h-2.5zM650.4 253.7h2.5v2.5h-2.5zM655.4 253.7h2.5v2.5h-2.5zM655.4 248.9h2.5v2.5h-2.5zM650.4 244.3h2.5v2.5h-2.5zM655.4 244.3h2.5v2.5h-2.5zM650.4 239.8h2.5v2.5h-2.5zM659.4 256.8h2.5v2.5h-2.5zM664.4 256.8h2.5v2.5h-2.5zM673.4 253.7h2.5v2.5h-2.5zM668.4 244.3h2.5v2.5h-2.5zM668.4 253.7h2.5v2.5h-2.5zM673.4 244.3h2.5v2.5h-2.5zM677.4 239.8h2.5v2.5h-2.5zM682.4 239.8h2.5v2.5h-2.5zM677.4 253.7h2.5v2.5h-2.5zM677.4 248.9h2.5v2.5h-2.5zM682.4 248.9h2.5v2.5h-2.5zM682.4 244.3h2.5v2.5h-2.5zM677.4 244.3h2.5v2.5h-2.5zM691.4 239.8h2.5v2.5h-2.5zM691.4 244.3h2.5v2.5h-2.5zM686.4 239.8h2.5v2.5h-2.5zM686.4 244.3h2.5v2.5h-2.5zM691.4 236.7h2.5v2.5h-2.5zM695.4 236.7h2.5v2.5h-2.5zM700.4 231.9h2.5v2.5h-2.5zM700.4 236.7h2.5v2.5h-2.5zM709.4 227.3h2.5v2.5h-2.5zM704.4 231.9h2.5v2.5h-2.5zM718.4 231.9h2.5v2.5h-2.5zM713.4 227.3h2.5v2.5h-2.5zM722.4 236.7h2.5v2.5h-2.5zM727.4 236.7h2.5v2.5h-2.5zM722.4 231.9h2.5v2.5h-2.5zM727.4 231.9h2.5v2.5h-2.5zM727.4 227.3h2.5v2.5h-2.5zM736.4 244.3h2.5v2.5h-2.5zM731.4 239.8h2.5v2.5h-2.5zM736.4 239.8h2.5v2.5h-2.5zM745.4 248.9h2.5v2.5h-2.5zM740.4 248.9h2.5v2.5h-2.5zM745.4 244.3h2.5v2.5h-2.5zM740.4 244.3h2.5v2.5h-2.5zM745.4 239.8h2.5v2.5h-2.5zM749.4 253.7h2.5v2.5h-2.5zM754.4 244.3h2.5v2.5h-2.5zM754.4 248.9h2.5v2.5h-2.5zM754.4 253.7h2.5v2.5h-2.5zM763.4 210.3h2.5v2.5h-2.5zM763.4 205.8h2.5v2.5h-2.5zM758.4 219.7h2.5v2.5h-2.5zM763.4 219.7h2.5v2.5h-2.5zM763.4 214.9h2.5v2.5h-2.5zM763.4 227.3h2.5v2.5h-2.5zM763.4 222.8h2.5v2.5h-2.5zM758.4 236.7h2.5v2.5h-2.5zM763.4 236.7h2.5v2.5h-2.5zM758.4 231.9h2.5v2.5h-2.5zM763.4 231.9h2.5v2.5h-2.5zM758.4 239.8h2.5v2.5h-2.5zM763.4 239.8h2.5v2.5h-2.5zM758.4 244.3h2.5v2.5h-2.5zM758.4 248.9h2.5v2.5h-2.5zM772.4 154.8h2.5v2.5h-2.5zM767.4 168.7h2.5v2.5h-2.5zM772.4 168.7h2.5v2.5h-2.5zM772.4 163.9h2.5v2.5h-2.5zM767.4 163.9h2.5v2.5h-2.5zM767.4 159.3h2.5v2.5h-2.5zM772.4 159.3h2.5v2.5h-2.5zM767.4 154.8h2.5v2.5h-2.5zM767.4 180.9h2.5v2.5h-2.5zM772.4 185.7h2.5v2.5h-2.5zM772.4 180.9h2.5v2.5h-2.5zM767.4 176.3h2.5v2.5h-2.5zM772.4 176.3h2.5v2.5h-2.5zM767.4 185.7h2.5v2.5h-2.5zM767.4 171.8h2.5v2.5h-2.5zM772.4 171.8h2.5v2.5h-2.5zM772.4 197.9h2.5v2.5h-2.5zM767.4 193.3h2.5v2.5h-2.5zM772.4 193.3h2.5v2.5h-2.5zM767.4 188.8h2.5v2.5h-2.5zM772.4 188.8h2.5v2.5h-2.5zM767.4 202.7h2.5v2.5h-2.5zM772.4 202.7h2.5v2.5h-2.5zM767.4 197.9h2.5v2.5h-2.5zM767.4 205.8h2.5v2.5h-2.5zM767.4 210.3h2.5v2.5h-2.5zM767.4 214.9h2.5v2.5h-2.5zM767.4 219.7h2.5v2.5h-2.5zM772.4 151.7h2.5v2.5h-2.5zM772.4 137.8h2.5v2.5h-2.5zM772.4 142.3h2.5v2.5h-2.5zM772.4 146.9h2.5v2.5h-2.5zM781.4 142.3h2.5v2.5h-2.5zM781.4 137.8h2.5v2.5h-2.5zM776.4 151.7h2.5v2.5h-2.5zM781.4 151.7h2.5v2.5h-2.5zM781.4 146.9h2.5v2.5h-2.5zM781.4 159.3h2.5v2.5h-2.5zM776.4 154.8h2.5v2.5h-2.5zM781.4 154.8h2.5v2.5h-2.5zM776.4 168.7h2.5v2.5h-2.5zM781.4 168.7h2.5v2.5h-2.5zM776.4 163.9h2.5v2.5h-2.5zM781.4 163.9h2.5v2.5h-2.5zM776.4 159.3h2.5v2.5h-2.5zM785.4 185.7h2.5v2.5h-2.5zM785.4 171.8h2.5v2.5h-2.5zM785.4 180.9h2.5v2.5h-2.5zM785.4 176.3h2.5v2.5h-2.5zM790.4 171.8h2.5v2.5h-2.5zM785.4 197.9h2.5v2.5h-2.5zM785.4 202.7h2.5v2.5h-2.5zM785.4 188.8h2.5v2.5h-2.5zM785.4 193.3h2.5v2.5h-2.5zM790.4 210.3h2.5v2.5h-2.5zM790.4 219.7h2.5v2.5h-2.5zM785.4 210.3h2.5v2.5h-2.5zM790.4 214.9h2.5v2.5h-2.5zM785.4 205.8h2.5v2.5h-2.5zM790.4 222.8h2.5v2.5h-2.5zM790.4 227.3h2.5v2.5h-2.5zM794.4 236.7h2.5v2.5h-2.5zM794.4 222.8h2.5v2.5h-2.5zM799.4 222.8h2.5v2.5h-2.5zM794.4 231.9h2.5v2.5h-2.5zM799.4 231.9h2.5v2.5h-2.5zM799.4 227.3h2.5v2.5h-2.5zM799.4 244.3h2.5v2.5h-2.5zM799.4 239.8h2.5v2.5h-2.5zM808.4 248.9h2.5v2.5h-2.5zM803.4 239.8h2.5v2.5h-2.5zM803.4 253.7h2.5v2.5h-2.5zM803.4 248.9h2.5v2.5h-2.5zM808.4 244.3h2.5v2.5h-2.5zM803.4 244.3h2.5v2.5h-2.5zM808.4 239.8h2.5v2.5h-2.5zM808.4 253.7h2.5v2.5h-2.5zM812.4 248.9h2.5v2.5h-2.5zM817.4 253.7h2.5v2.5h-2.5zM812.4 244.3h2.5v2.5h-2.5zM812.4 239.8h2.5v2.5h-2.5zM812.4 253.7h2.5v2.5h-2.5zM817.4 256.8h2.5v2.5h-2.5zM821.4 248.9h2.5v2.5h-2.5zM821.4 253.7h2.5v2.5h-2.5zM826.4 244.3h2.5v2.5h-2.5zM826.4 253.7h2.5v2.5h-2.5zM821.4 256.8h2.5v2.5h-2.5zM835.4 253.7h2.5v2.5h-2.5zM835.4 239.8h2.5v2.5h-2.5zM835.4 248.9h2.5v2.5h-2.5zM830.4 239.8h2.5v2.5h-2.5zM835.4 244.3h2.5v2.5h-2.5zM830.4 253.7h2.5v2.5h-2.5zM844.4 253.7h2.5v2.5h-2.5zM844.4 248.9h2.5v2.5h-2.5zM839.4 239.8h2.5v2.5h-2.5zM844.4 244.3h2.5v2.5h-2.5zM839.4 248.9h2.5v2.5h-2.5zM844.4 239.8h2.5v2.5h-2.5z"/><path fill="#7c5a84" d="M83.3 219.7h2.5v2.5h-2.5zM88.3 214.9h2.5v2.5h-2.5zM155.3 219.7h2.5v2.5h-2.5zM376.4 202.7h2.5v2.5h-2.5zM385.4 163.9h2.5v2.5h-2.5zM385.4 154.8h2.5v2.5h-2.5zM385.4 159.3h2.5v2.5h-2.5zM380.4 168.7h2.5v2.5h-2.5zM380.4 176.3h2.5v2.5h-2.5zM380.4 180.9h2.5v2.5h-2.5zM380.4 185.7h2.5v2.5h-2.5zM380.4 171.8h2.5v2.5h-2.5zM380.4 197.9h2.5v2.5h-2.5zM380.4 188.8h2.5v2.5h-2.5zM380.4 193.3h2.5v2.5h-2.5zM385.4 134.7h2.5v2.5h-2.5zM385.4 146.9h2.5v2.5h-2.5zM385.4 151.7h2.5v2.5h-2.5zM385.4 137.8h2.5v2.5h-2.5zM385.4 142.3h2.5v2.5h-2.5zM389.4 113.0h2.5v2.5h-2.5zM389.4 117.7h2.5v2.5h-2.5zM389.4 120.8h2.5v2.5h-2.5zM389.4 125.3h2.5v2.5h-2.5zM389.4 129.9h2.5v2.5h-2.5zM389.4 134.7h2.5v2.5h-2.5zM394.4 151.7h2.5v2.5h-2.5zM394.4 137.8h2.5v2.5h-2.5zM394.4 142.3h2.5v2.5h-2.5zM394.4 146.9h2.5v2.5h-2.5zM394.4 154.8h2.5v2.5h-2.5zM394.4 159.3h2.5v2.5h-2.5zM394.4 163.9h2.5v2.5h-2.5zM394.4 168.7h2.5v2.5h-2.5zM394.4 171.8h2.5v2.5h-2.5zM394.4 176.3h2.5v2.5h-2.5zM394.4 180.9h2.5v2.5h-2.5zM398.4 185.7h2.5v2.5h-2.5zM398.4 188.8h2.5v2.5h-2.5zM398.4 193.3h2.5v2.5h-2.5zM398.4 197.9h2.5v2.5h-2.5zM398.4 202.7h2.5v2.5h-2.5zM398.4 210.3h2.5v2.5h-2.5zM398.4 214.9h2.5v2.5h-2.5zM398.4 219.7h2.5v2.5h-2.5zM398.4 205.8h2.5v2.5h-2.5zM403.4 231.9h2.5v2.5h-2.5zM403.4 236.7h2.5v2.5h-2.5zM398.4 222.8h2.5v2.5h-2.5zM398.4 227.3h2.5v2.5h-2.5zM466.4 256.8h2.5v2.5h-2.5zM488.4 205.8h2.5v2.5h-2.5zM488.4 210.3h2.5v2.5h-2.5zM488.4 214.9h2.5v2.5h-2.5zM488.4 219.7h2.5v2.5h-2.5zM493.4 193.3h2.5v2.5h-2.5zM493.4 197.9h2.5v2.5h-2.5zM493.4 202.7h2.5v2.5h-2.5zM497.4 202.7h2.5v2.5h-2.5zM497.4 214.9h2.5v2.5h-2.5zM502.4 219.7h2.5v2.5h-2.5zM497.4 205.8h2.5v2.5h-2.5zM497.4 210.3h2.5v2.5h-2.5zM506.4 236.7h2.5v2.5h-2.5zM583.4 256.8h2.5v2.5h-2.5zM619.4 256.8h2.5v2.5h-2.5zM673.4 256.8h2.5v2.5h-2.5zM668.4 256.8h2.5v2.5h-2.5zM749.4 256.8h2.5v2.5h-2.5zM767.4 222.8h2.5v2.5h-2.5zM767.4 227.3h2.5v2.5h-2.5zM781.4 188.8h2.5v2.5h-2.5zM70.3 426.8h2.5v2.5h-2.5zM65.3 426.8h2.5v2.5h-2.5zM74.3 426.8h2.5v2.5h-2.5zM79.3 426.8h2.5v2.5h-2.5zM83.3 426.8h2.5v2.5h-2.5zM88.3 426.8h2.5v2.5h-2.5zM97.3 426.8h2.5v2.5h-2.5zM92.3 426.8h2.5v2.5h-2.5zM106.3 426.8h2.5v2.5h-2.5zM101.3 426.8h2.5v2.5h-2.5zM110.3 426.8h2.5v2.5h-2.5zM115.3 426.8h2.5v2.5h-2.5zM119.3 426.8h2.5v2.5h-2.5zM124.3 426.8h2.5v2.5h-2.5zM133.3 426.8h2.5v2.5h-2.5zM128.3 426.8h2.5v2.5h-2.5zM137.3 426.8h2.5v2.5h-2.5zM142.3 426.8h2.5v2.5h-2.5zM146.3 426.8h2.5v2.5h-2.5zM151.3 426.8h2.5v2.5h-2.5zM155.3 426.8h2.5v2.5h-2.5zM160.3 426.8h2.5v2.5h-2.5zM169.3 426.8h2.5v2.5h-2.5zM164.3 426.8h2.5v2.5h-2.5zM173.3 426.8h2.5v2.5h-2.5zM178.3 426.8h2.5v2.5h-2.5zM182.3 426.8h2.5v2.5h-2.5zM187.3 426.8h2.5v2.5h-2.5zM191.3 426.8h2.5v2.5h-2.5zM196.3 426.8h2.5v2.5h-2.5zM205.3 426.8h2.5v2.5h-2.5zM200.3 426.8h2.5v2.5h-2.5zM209.3 426.8h2.5v2.5h-2.5zM214.3 426.8h2.5v2.5h-2.5zM218.3 426.8h2.5v2.5h-2.5zM223.3 426.8h2.5v2.5h-2.5zM227.3 426.8h2.5v2.5h-2.5zM232.3 426.8h2.5v2.5h-2.5zM241.3 426.8h2.5v2.5h-2.5zM236.3 426.8h2.5v2.5h-2.5zM245.3 426.8h2.5v2.5h-2.5zM250.3 426.8h2.5v2.5h-2.5zM254.3 426.8h2.5v2.5h-2.5zM259.4 440.6h2.5v2.5h-2.5zM259.4 426.8h2.5v2.5h-2.5zM259.4 435.9h2.5v2.5h-2.5zM259.4 431.4h2.5v2.5h-2.5zM259.4 443.8h2.5v2.5h-2.5zM259.4 448.4h2.5v2.5h-2.5zM259.4 452.9h2.5v2.5h-2.5zM259.4 457.6h2.5v2.5h-2.5zM259.4 460.8h2.5v2.5h-2.5zM259.4 465.4h2.5v2.5h-2.5zM263.4 469.9h2.5v2.5h-2.5zM263.4 474.6h2.5v2.5h-2.5zM263.4 477.8h2.5v2.5h-2.5zM263.4 482.4h2.5v2.5h-2.5zM263.4 486.9h2.5v2.5h-2.5zM263.4 491.6h2.5v2.5h-2.5zM263.4 499.4h2.5v2.5h-2.5zM263.4 503.9h2.5v2.5h-2.5zM263.4 508.6h2.5v2.5h-2.5zM263.4 494.8h2.5v2.5h-2.5zM263.4 525.6h2.5v2.5h-2.5zM263.4 511.8h2.5v2.5h-2.5zM263.4 516.4h2.5v2.5h-2.5zM263.4 521.0h2.5v2.5h-2.5zM263.4 528.8h2.5v2.5h-2.5zM263.4 533.4h2.5v2.5h-2.5zM263.4 538.0h2.5v2.5h-2.5zM263.4 542.6h2.5v2.5h-2.5zM740.4 389.6h2.5v2.5h-2.5zM745.4 384.9h2.5v2.5h-2.5zM740.4 384.9h2.5v2.5h-2.5zM745.4 380.4h2.5v2.5h-2.5zM745.4 389.6h2.5v2.5h-2.5zM740.4 380.4h2.5v2.5h-2.5zM749.4 389.6h2.5v2.5h-2.5zM754.4 389.6h2.5v2.5h-2.5zM754.4 384.9h2.5v2.5h-2.5zM749.4 384.9h2.5v2.5h-2.5zM749.4 380.4h2.5v2.5h-2.5zM763.4 389.6h2.5v2.5h-2.5zM758.4 384.9h2.5v2.5h-2.5zM758.4 389.6h2.5v2.5h-2.5zM749.4 392.8h2.5v2.5h-2.5zM754.4 392.8h2.5v2.5h-2.5z"/><path fill="#e80000" d="M218.3 895.0h2.5v2.5h-2.5zM223.3 890.4h2.5v2.5h-2.5zM223.3 899.6h2.5v2.5h-2.5zM218.3 890.4h2.5v2.5h-2.5zM223.3 895.0h2.5v2.5h-2.5zM218.3 899.6h2.5v2.5h-2.5zM232.3 899.6h2.5v2.5h-2.5zM227.3 890.4h2.5v2.5h-2.5zM232.3 895.0h2.5v2.5h-2.5zM227.3 899.6h2.5v2.5h-2.5zM227.3 895.0h2.5v2.5h-2.5zM236.3 895.0h2.5v2.5h-2.5zM236.3 899.6h2.5v2.5h-2.5zM241.3 899.6h2.5v2.5h-2.5zM227.3 902.8h2.5v2.5h-2.5zM232.3 902.8h2.5v2.5h-2.5zM236.3 907.4h2.5v2.5h-2.5zM241.3 907.4h2.5v2.5h-2.5zM236.3 902.8h2.5v2.5h-2.5zM241.3 902.8h2.5v2.5h-2.5zM241.3 916.6h2.5v2.5h-2.5zM241.3 912.0h2.5v2.5h-2.5zM236.3 912.0h2.5v2.5h-2.5zM250.3 912.0h2.5v2.5h-2.5zM245.3 916.6h2.5v2.5h-2.5zM245.3 902.8h2.5v2.5h-2.5zM250.3 907.4h2.5v2.5h-2.5zM245.3 912.0h2.5v2.5h-2.5zM250.3 916.6h2.5v2.5h-2.5zM245.3 907.4h2.5v2.5h-2.5zM236.3 933.6h2.5v2.5h-2.5zM241.3 933.6h2.5v2.5h-2.5zM241.3 919.8h2.5v2.5h-2.5zM236.3 929.0h2.5v2.5h-2.5zM241.3 929.0h2.5v2.5h-2.5zM241.3 924.4h2.5v2.5h-2.5zM245.3 919.8h2.5v2.5h-2.5zM250.3 924.4h2.5v2.5h-2.5zM245.3 933.6h2.5v2.5h-2.5zM245.3 929.0h2.5v2.5h-2.5zM250.3 933.6h2.5v2.5h-2.5zM250.3 919.8h2.5v2.5h-2.5zM245.3 924.4h2.5v2.5h-2.5zM250.3 929.0h2.5v2.5h-2.5zM200.3 929.0h2.5v2.5h-2.5zM200.3 933.6h2.5v2.5h-2.5zM191.3 936.8h2.5v2.5h-2.5zM196.3 936.8h2.5v2.5h-2.5zM196.3 941.4h2.5v2.5h-2.5zM200.3 946.0h2.5v2.5h-2.5zM205.3 946.0h2.5v2.5h-2.5zM200.3 941.4h2.5v2.5h-2.5zM205.3 941.4h2.5v2.5h-2.5zM200.3 936.8h2.5v2.5h-2.5zM205.3 936.8h2.5v2.5h-2.5zM209.3 950.6h2.5v2.5h-2.5zM214.3 950.6h2.5v2.5h-2.5zM209.3 946.0h2.5v2.5h-2.5zM214.3 946.0h2.5v2.5h-2.5zM209.3 941.4h2.5v2.5h-2.5zM214.3 941.4h2.5v2.5h-2.5zM209.3 936.8h2.5v2.5h-2.5zM227.3 946.0h2.5v2.5h-2.5zM232.3 936.8h2.5v2.5h-2.5zM227.3 941.4h2.5v2.5h-2.5zM232.3 946.0h2.5v2.5h-2.5zM227.3 936.8h2.5v2.5h-2.5zM232.3 941.4h2.5v2.5h-2.5zM227.3 950.6h2.5v2.5h-2.5zM236.3 936.8h2.5v2.5h-2.5zM241.3 936.8h2.5v2.5h-2.5zM236.3 946.0h2.5v2.5h-2.5zM236.3 941.4h2.5v2.5h-2.5zM241.3 941.4h2.5v2.5h-2.5zM245.3 936.8h2.5v2.5h-2.5zM223.3 946.0h2.5v2.5h-2.5zM218.3 950.6h2.5v2.5h-2.5zM218.3 946.0h2.5v2.5h-2.5zM223.3 941.4h2.5v2.5h-2.5zM223.3 950.6h2.5v2.5h-2.5zM218.3 941.4h2.5v2.5h-2.5z"/><path fill="#3465a4" d="M9 755.5H18V765.5H9zM18 753H27V765.5H18zM27 763H36V765.5H27zM36 763H45V765.5H36zM45 763H54V765.5H45zM54 763H63V765.5H54zM63 763H72V765.5H63zM72 763H81V765.5H72zM81 763H90V765.5H81zM90 763H99V765.5H90zM99 763H108V765.5H99zM108 763H117V765.5H108zM117 763H126V765.5H117zM126 763H135V765.5H126zM135 763H144V765.5H135zM144 761H153V765.5H144zM153 763H162V765.5H153zM162 763H171V765.5H162zM171 763H180V765.5H171zM180 759H189V765.5H180zM189 749H198V765.5H189zM198 756.7H207V765.5H198zM207 750.8H216V765.5H207zM216 763H225V765.5H216zM225 763H234V765.5H225zM234 763H243V765.5H234zM243 763H252V765.5H243zM252 763H261V765.5H252zM261 763H270V765.5H261zM270 763H279V765.5H270zM279 760.6H288V765.5H279zM288 760.6H297V765.5H288zM297 763H306V765.5H297zM306 763H315V765.5H306zM315 763H324V765.5H315zM324 763H333V765.5H324zM333 763H342V765.5H333zM342 763H351V765.5H342zM351 763H360V765.5H351zM360 763H369V765.5H360zM369 763H378V765.5H369zM378 763H387V765.5H378zM387 757H396V765.5H387zM396 752.8H405V765.5H396zM405 763H414V765.5H405zM414 760.6H423V765.5H414zM423 763H432V765.5H423zM9 831H18V833.5H9zM18 831H27V833.5H18zM27 831H36V833.5H27zM36 831H45V833.5H36zM45 831H54V833.5H45zM54 831H63V833.5H54zM63 831H72V833.5H63zM72 831H81V833.5H72zM81 831H90V833.5H81zM90 831H99V833.5H90zM99 831H108V833.5H99zM108 831H117V833.5H108zM117 831H126V833.5H117zM126 831H135V833.5H126zM135 831H144V833.5H135zM144 831H153V833.5H144zM153 831H162V833.5H153zM162 831H171V833.5H162zM171 831H180V833.5H171zM180 817H189V833.5H180zM189 831H198V833.5H189zM198 831H207V833.5H198zM207 831H216V833.5H207zM216 831H225V833.5H216zM225 831H234V833.5H225zM234 831H243V833.5H234zM243 831H252V833.5H243zM252 831H261V833.5H252zM261 831H270V833.5H261zM270 831H279V833.5H270zM279 831H288V833.5H279zM288 831H297V833.5H288zM297 831H306V833.5H297zM306 831H315V833.5H306zM315 831H324V833.5H315zM324 831H333V833.5H324zM333 831H342V833.5H333zM342 831H351V833.5H342zM351 831H360V833.5H351zM360 831H369V833.5H360zM369 831H378V833.5H369zM378 831H387V833.5H378zM387 831H396V833.5H387zM396 831H405V833.5H396zM405 831H414V833.5H405zM414 831H423V833.5H414zM423 831H432V833.5H423z"/><path fill="#8ae234" d="M772 702L778.6 713.6H765.4Z"/></svg>
<div class="b" style="left:4px;top:9px;width:883px;height:324px;border-color:#06989a"></div><div class="t" style="left:18px;top:0px;color:#eeeeec;background:#300a24;">CPU History</div><div class="b" style="left:4px;top:349px;width:586px;height:324px;border-color:#06989a"></div><div class="t" style="left:18px;top:340px;color:#eeeeec;background:#300a24;">Memory and Swap History</div><div class="b" style="left:598px;top:349px;width:289px;height:154px;border-color:#06989a"></div><div class="t" style="left:612px;top:340px;color:#eeeeec;background:#300a24;">Memory</div><div class="b" style="left:598px;top:519px;width:289px;height:154px;border-color:#06989a"></div><div class="t" style="left:612px;top:510px;color:#eeeeec;background:#300a24;">Swap</div><div class="b" style="left:4px;top:689px;width:433px;height:154px;border-color:#06989a"></div><div class="t" style="left:18px;top:680px;color:#eeeeec;background:#300a24;">Network History</div><div class="b" style="left:4px;top:859px;width:433px;height:154px;border-color:#06989a"></div><div class="t" style="left:18px;top:850px;color:#eeeeec;background:#300a24;">Disk usage</div><div class="b" style="left:445px;top:689px;width:433px;height:324px;border-color:#06989a"></div><div class="t" style="left:459px;top:680px;color:#eeeeec;background:#300a24;">Processes</div><div class="t" style="left:27px;top:51px;color:#4e9a06;">105</div><div class="t" style="left:27px;top:102px;color:#4e9a06;">78</div><div class="t" style="left:27px;top:153px;color:#4e9a06;">52</div><div class="t" style="left:27px;top:204px;color:#4e9a06;">26</div><div class="t" style="left:27px;top:255px;color:#4e9a06;">0</div><div class="b" style="left:742px;top:43px;width:127px;height:86px;border-color:#343e3c"></div><div class="t" style="left:747px;top:51px;color:#75507b;">CPU1  11.2%</div><div class="t" style="left:747px;top:68px;color:#06989a;">CPU2   7.1%</div><div class="t" style="left:747px;top:85px;color:#3465a4;">CPU3  13.3%</div><div class="t" style="left:747px;top:102px;color:#d0a800;">CPU4  10.3%</div><div class="t" style="left:27px;top:391px;color:#4e9a06;">115</div><div class="t" style="left:27px;top:442px;color:#4e9a06;">86</div><div class="t" style="left:27px;top:493px;color:#4e9a06;">57</div><div class="t" style="left:27px;top:544px;color:#4e9a06;">29</div><div class="t" style="left:27px;top:595px;color:#4e9a06;">0</div><div class="b" style="left:490px;top:383px;width:82px;height:52px;border-color:#343e3c"></div><div class="t" style="left:495px;top:391px;color:#75507b;">Memory</div><div class="t" style="left:495px;top:408px;color:#06989a;">Swap</div><div class="t" style="left:729px;top:408px;color:#d3d7cf;">10%</div><div class="t" style="left:657px;top:459px;color:#d3d7cf;">1.45 GB of 15.14 GB</div><div class="t" style="left:729px;top:578px;color:#d3d7cf;">14%</div><div class="t" style="left:657px;top:629px;color:#d3d7cf;">2.30 GB of 16.00 GB</div><div class="t" style="left:9px;top:714px;color:#eeeeec;font-weight:bold;">Receiving:      219.61  B/s</div><div class="t" style="left:9px;top:731px;color:#eeeeec;font-weight:bold;">Total received: 1.50 GB:</div><div class="t" style="left:9px;top:782px;color:#eeeeec;font-weight:bold;">Transferring:      0.00 B/s</div><div class="t" style="left:9px;top:799px;color:#eeeeec;font-weight:bold;">Total transferred: 41.67 MB:</div><div class="t" style="left:207px;top:918px;color:#d3d7cf;">66%</div><div class="t" style="left:126px;top:969px;color:#d3d7cf;">99.46 GB of 149.83 GB</div><div class="t" style="left:450px;top:697px;color:#8ae234;font-weight:bold;">PID</div><div class="t" style="left:513px;top:697px;color:#8ae234;font-weight:bold;">Command</div><div class="t" style="left:729px;top:697px;color:#8ae234;font-weight:bold;">%CPU</div><div class="t" style="left:792px;top:697px;color:#8ae234;font-weight:bold;">%MEM</div><div class="sel" style="left:459px;top:732px;width:414px;height:17px;background:#3465a4"></div><div class="t" style="left:459px;top:731px;color:#d3d7cf;">8939   node /usr/bin/gtop       3.5   0.5</div><div class="t" style="left:459px;top:748px;color:#4e9a06;">2579   compiz                   1.5   0.4</div><div class="t" style="left:459px;top:765px;color:#4e9a06;">3166   /opt/google/chrome/chrom 1.4   0.7</div><div class="t" style="left:459px;top:782px;color:#4e9a06;">1057   /usr/lib/xorg/Xorg -core 1.4   0.2</div><div class="t" style="left:459px;top:799px;color:#4e9a06;">2908   /opt/google/chrome/chrom 0.6   0.6</div><div class="t" style="left:459px;top:816px;color:#4e9a06;">31872  /usr/lib/gnome-terminal/ 0.6   0.0</div><div class="t" style="left:459px;top:833px;color:#4e9a06;">2775   indicator-multiload      0.3   0.0</div><div class="t" style="left:459px;top:850px;color:#4e9a06;">2561   /usr/lib/x86_64-linux-gn 0.3   0.1</div><div class="t" style="left:459px;top:867px;color:#4e9a06;">2979   /opt/google/chrome/chrom 0.3   0.3</div><div class="t" style="left:459px;top:884px;color:#4e9a06;">4449   /usr/share/spotify/spoti 0.3   0.5</div><div class="t" style="left:459px;top:901px;color:#4e9a06;">31866  /usr/bin/peek --gapplica 0.3   0.1</div><div class="t" style="left:459px;top:918px;color:#4e9a06;">2419   dbus-daemon --fork --ses 0.2   0.0</div><div class="t" style="left:459px;top:935px;color:#4e9a06;">2489   /usr/lib/x86_64-linux-gn 0.2   0.0</div><div class="t" style="left:459px;top:952px;color:#4e9a06;">2615   /usr/lib/x86_64-linux-gn 0.2   0.0</div><div class="t" style="left:459px;top:969px;color:#4e9a06;">2450   /usr/bin/ibus-daemon --d 0.1   0.0</div><div class="t" style="left:459px;top:986px;color:#4e9a06;">2544   /usr/lib/unity-settings- 0.1   0.0</div>
</body></html>
